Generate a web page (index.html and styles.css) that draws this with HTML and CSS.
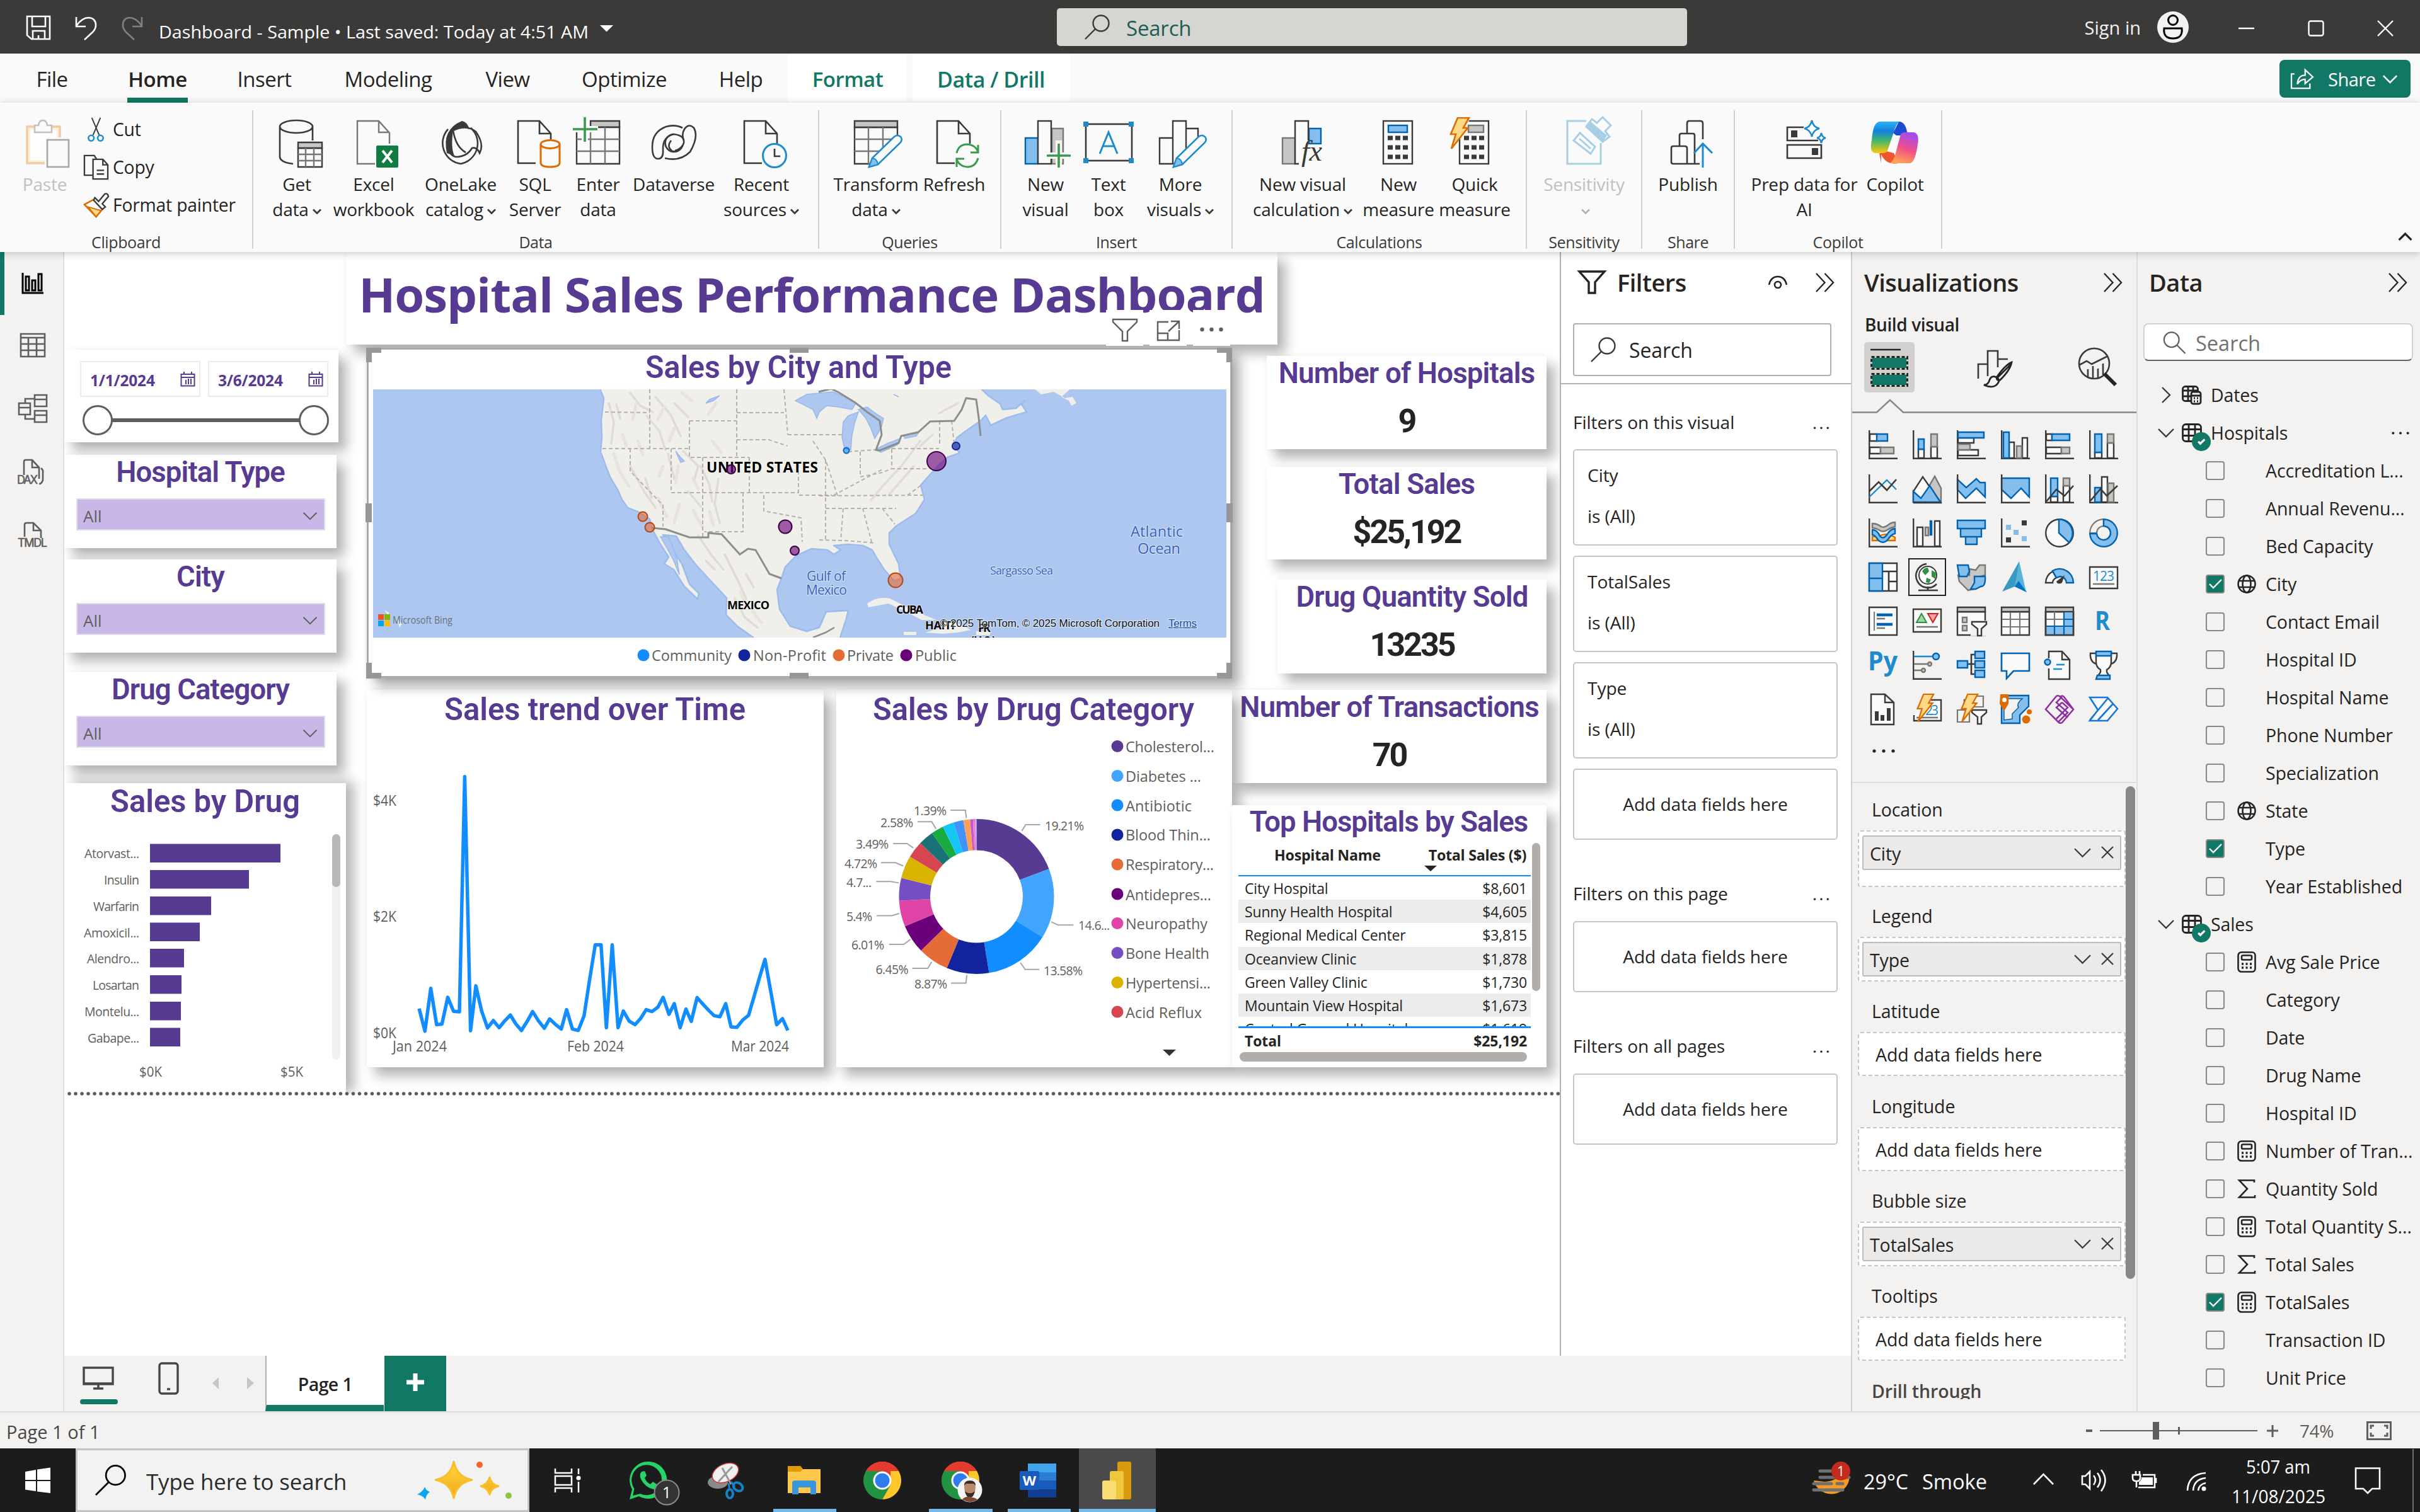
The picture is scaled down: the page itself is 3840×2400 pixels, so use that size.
FILE: index.html
```html
<!DOCTYPE html>
<html lang="en">
<head>
<meta charset="utf-8">
<title>Dashboard - Sample</title>
<link rel="stylesheet" href="styles.css">
</head>
<body>
<svg class="defs" width="0" height="0" aria-hidden="true">
  <defs>
    <symbol id="chev" viewBox="0 0 28 16"><path d="M2 2L14 14L26 2"/></symbol>
    <symbol id="dbl" viewBox="0 0 32 32"><path d="M2 1L16 16L2 31M16 1L30 16L16 31"/></symbol>
    <symbol id="mag" viewBox="0 0 40 40"><circle cx="26" cy="14" r="12.5"/><path d="M17 23L1 39"/></symbol>
    <symbol id="check" viewBox="0 0 30 30"><path d="M6 15L12 21L25 8"/></symbol>
    <symbol id="dots3" viewBox="0 0 36 6"><circle cx="3" cy="3" r="2.6"/><circle cx="18" cy="3" r="2.6"/><circle cx="33" cy="3" r="2.6"/></symbol>
    <symbol id="axis" viewBox="0 0 46 46"><path d="M1.2 0V44.8H46" fill="none" stroke="#3b3a39" stroke-width="2.4"/></symbol>
    <symbol id="globe" viewBox="0 0 30 30"><circle cx="15" cy="15" r="13.5"/><ellipse cx="15" cy="15" rx="6.5" ry="13.5"/><path d="M2.5 10H27.5M2.5 20H27.5"/></symbol>
    <symbol id="calc" viewBox="0 0 30 34"><rect x="1.5" y="1.5" width="27" height="31" rx="5"/><rect x="7" y="6.500" width="16" height="7" rx="2"/><path d="M7 20h3M13.500 20h3M20 20h3M7 26h3M13.500 26h3M20 26h3" stroke-width="3.600"/></symbol>
    <symbol id="sigma" viewBox="0 0 30 30"><path d="M27 5V1.500H3L16 15L3 28.500H28V25"/></symbol>
    <symbol id="table" viewBox="0 0 32 30"><rect x="1.500" y="1.500" width="29" height="27" rx="5"/><path d="M1.500 9.500H30M1.500 19.500H30M11 1.500V28M21 1.500V28"/></symbol>
    <symbol id="doc" viewBox="0 0 56 72"><path d="M54 38V22L36 2H2V69H30M36 2V22H54"/></symbol>
    <symbol id="pencil" viewBox="0 0 56 54"><path d="M2 52L7 38L42 4Q47 0 52 4Q56 9 51 14L16 48Z" fill="#fafafa" stroke="#1e8bcd" stroke-width="2.600"/><path d="M2 52L7 38Q15 39 16 48Z" fill="#83beec" stroke="#1e8bcd" stroke-width="2"/></symbol>
    <symbol id="bolt" viewBox="0 0 34 52"><path d="M14 1H32L23 17H30L4 50L11 27H3Z" fill="#ffd986" stroke="#dd6b00" stroke-width="2.600"/></symbol>
    <symbol id="cyl" viewBox="0 0 34 46"><path d="M2 8V38Q3 44 17 44T32 38V8" fill="#fafafa"/><ellipse cx="17" cy="8" rx="15" ry="6.500" fill="#fafafa"/></symbol>
    <symbol id="chrome" viewBox="0 0 60 60"><path d="M30 30L4 15A30 30 0 0 1 56 15Z" fill="#e33b2e"/><path d="M4 15A30 30 0 0 0 30 60L43 37L30 30Z" fill="#229342"/><path d="M56 15A30 30 0 0 1 30 60L43 37L43 15Z" fill="#fcc72b"/><path d="M4 15L17 38L30 15Z" fill="#229342"/><path d="M4 15A30 30 0 0 1 56 15H30Z" fill="#e33b2e"/><circle cx="30" cy="30" r="14.500" fill="#fff"/><circle cx="30" cy="30" r="11.500" fill="#2f7ded"/></symbol>
    <linearGradient id="cpA" x1="0" y1="0" x2="0" y2="1"><stop offset="0" stop-color="#2ab4f4"/><stop offset=".3" stop-color="#1380e0"/><stop offset=".6" stop-color="#43b668"/><stop offset="1" stop-color="#ffca0a"/></linearGradient>
    <linearGradient id="cpB" x1="0.600" y1="0" x2="0.300" y2="1"><stop offset="0" stop-color="#a34cf2"/><stop offset=".5" stop-color="#ee4f8a"/><stop offset="1" stop-color="#ffa84c"/></linearGradient>
    <linearGradient id="gold" x1="0" y1="0" x2="0" y2="1"><stop offset="0" stop-color="#ffd83a"/><stop offset="1" stop-color="#f0a81c"/></linearGradient>
  </defs>
</svg>

<header class="titlebar">
  <svg class="tb-left" viewBox="0 0 1000 85">
    <g fill="none" stroke="#fff" stroke-width="2.600">
      <path d="M43 26H79V62H50L43 56ZM51 26V42H72V26M52 62V49H71V62M61 56V62"/>
      <path d="M121 27V42H136M121 41Q130 28 141 28Q152 29 152 40Q152 46 147 51L134 63"/>
      <path d="M225 27V42H210M225 41Q216 28 205 28Q195 29 195 40Q195 46 200 51L213 63" stroke="#83817f"/>
    </g>
    <text x="252" y="60.500" textLength="682" lengthAdjust="spacingAndGlyphs" class="tb-title">Dashboard - Sample • Last saved: Today at 4:51 AM</text>
    <path d="M952 40H973L962.500 50.500Z" fill="#fff"/>
  </svg>
  <div class="tb-search"><svg class="ico40 st-dark"><use href="#mag"/></svg><span>Search</span></div>
  <div class="tb-right">
    <span>Sign in</span>
    <svg class="avatar" viewBox="0 0 50 50"><circle cx="25" cy="25" r="25" fill="#f3f2f1"/><g fill="none" stroke="#000" stroke-width="3"><circle cx="25" cy="14" r="7.500"/><path d="M11 27H39Q41 43 25 43T11 27Z"/></g></svg>
    <svg class="winbtn" viewBox="0 0 26 26"><path d="M0 13H25"/></svg>
    <svg class="winbtn" viewBox="0 0 26 26"><rect x="1.500" y="1.500" width="23" height="23" rx="3"/></svg>
    <svg class="winbtn" viewBox="0 0 26 26"><path d="M1 1L25 25M25 1L1 25"/></svg>
  </div>
</header>

<nav class="tabs">
  <span class="tab t-file">File</span><span class="tab t-home on">Home</span><span class="tab t-insert">Insert</span><span class="tab t-model">Modeling</span><span class="tab t-view">View</span><span class="tab t-opt">Optimize</span><span class="tab t-help">Help</span><span class="tab t-format ctx">Format</span><span class="tab t-drill ctx">Data / Drill</span>
  <div class="share"><svg viewBox="0 0 40 36" class="share-ico"><path d="M7 10H2V34H33V26M12 27Q13 12 25 12V3L38 15L25 26V19Q17 19 12 27Z"/></svg><span>Share</span><svg class="share-chev"><use href="#chev"/></svg></div>
</nav>

<section class="ribbon">
  <div class="grp g-clip">
    <div class="grp-body">
      <div class="btn off"><svg viewBox="0 0 100 90"><path d="M22 18H74V76H22Z" fill="#fbeed0" opacity=".8"/><rect x="27" y="23" width="42" height="48" fill="#fdfdfd"/><path d="M54 76H22V18H74V40" fill="none" stroke="#f3c99f" stroke-width="3.500"/><path d="M34 27V16H40Q41 8 47 8T54 16H61V27Z" fill="#fafafa" stroke="#c2c0be" stroke-width="2.500"/><rect x="50" y="35" width="42" height="52" fill="#fafafa"/><rect x="54" y="39" width="34" height="43" fill="#fafafa" stroke="#a9a7a5" stroke-width="2.600"/></svg><b>Paste</b></div>
      <div class="clip-list">
        <div><svg viewBox="0 0 42 42"><g fill="none" stroke="#3b3a39" stroke-width="2"><path d="M14 2L26 30M28 2L16 30"/></g><g fill="none" stroke="#1e8bcd" stroke-width="2.600"><circle cx="13" cy="35" r="4.500"/><circle cx="28" cy="35" r="4.500"/></g></svg>Cut</div>
        <div><svg viewBox="0 0 42 42"><g fill="#fafafa" stroke="#3b3a39" stroke-width="2.400"><path d="M2 2H18L22 8V34H2Z"/><path d="M16 8H32L40 17V40H16ZM32 8V17H40M22 26H34M22 32H34"/></g></svg>Copy</div>
        <div><svg viewBox="0 0 42 42"><path d="M19 11L2 20L21 40L33 26Z" fill="#fafafa" stroke="#dd6b00" stroke-width="2.600"/><path d="M8 24L21 40L29 30Z" fill="#ffd986" stroke="#dd6b00" stroke-width="2"/><path d="M19 9L25 15L35 3Q40 1 41 7L31 19L36 24L31 28L17 13Z" fill="#fafafa" stroke="#3b3a39" stroke-width="2.400"/></svg>Format painter</div>
      </div>
    </div>
    <div class="grp-name">Clipboard</div>
  </div>
  <div class="grp g-data">
    <div class="grp-body">
      <div class="btn"><svg viewBox="0 0 100 90"><g class="k"><path d="M23 18V66Q24 75 44 77M75 18V40"/><ellipse cx="49" cy="18" rx="26" ry="10"/></g><path d="M52 52H90V82H52Z" class="wh"/><path d="M52 43H90V52H52Z" class="gf"/><path d="M52 62H90M52 72H90M64 52V82M77 52V82" class="k2"/></svg><b>Get<br>data<svg class="dn"><use href="#chev"/></svg></b></div>
      <div class="btn"><svg viewBox="0 0 100 90"><path d="M75 45V28L58 9H24V77H52M58 9V27H75" fill="none" stroke="#797774" stroke-width="2.400"/><rect x="54" y="48" width="35" height="35" rx="2" fill="#107c41"/><path d="M64 56L79 75M79 56L64 75" stroke="#fff" stroke-width="4"/></svg><b>Excel<br>workbook</b></div>
      <div class="btn"><svg viewBox="0 0 100 90"><path d="M28 60Q20 22 52 9Q60 10 64 22Q50 16 38 24Q34 52 40 64Z" fill="#3b3a39"/><g class="k"><path d="M30 22A33 33 0 0 0 50 77A33 33 0 0 0 66 20"/><path d="M38 24Q60 14 74 26Q88 46 80 60Q76 50 68 52Q60 66 42 66Q28 62 28 40Q30 26 38 24ZM38 24Q42 50 58 59"/></g></svg><b>OneLake<br>catalog<svg class="dn"><use href="#chev"/></svg></b></div>
      <div class="btn"><svg viewBox="0 0 100 90"><svg x="21" y="7" width="56" height="72" class="k"><use href="#doc"/></svg><svg x="57" y="38" width="34" height="46" class="o"><use href="#cyl"/></svg></svg><b>SQL<br>Server</b></div>
      <div class="btn"><svg viewBox="0 0 100 90"><path d="M38 9H84V19H38Z" class="gf"/><path d="M16 19H84V77H16Z" class="wh"/><path d="M16 38H84M16 57H84M38 19V77M61 19V77" class="k2"/><path d="M29 0V44M8 22H50" stroke="#fafafa" stroke-width="10"/><path d="M29 3V42M10 22H49" stroke="#3a9a4b" stroke-width="3.600"/></svg><b>Enter<br>data</b></div>
      <div class="btn"><svg viewBox="0 0 100 90"><g class="k"><path d="M50 30A14 14 0 1 0 64 48A20 20 0 0 1 52 56"/><path d="M64 20Q52 14 38 18Q16 26 16 50Q16 70 26 69Q34 68 33 55Q32 34 50 30Q68 32 66 44Q60 60 48 57Q38 50 46 40"/><path d="M36 68Q60 74 76 58Q90 34 82 20Q74 12 67 22Q62 30 66 40"/></g></svg><b>Dataverse</b></div>
      <div class="btn"><svg viewBox="0 0 100 90"><svg x="21" y="7" width="56" height="72" class="k"><use href="#doc"/></svg><circle cx="71" cy="64" r="18.500" fill="#fafafa" stroke="#1e8bcd" stroke-width="3"/><path d="M71 53V65H80" class="k"/></svg><b>Recent<br>sources<svg class="dn"><use href="#chev"/></svg></b></div>
    </div>
    <div class="grp-name">Data</div>
  </div>
  <div class="grp g-query">
    <div class="grp-body">
      <div class="btn"><svg viewBox="0 0 100 90"><path d="M16 19H84V77H16Z" class="wh"/><path d="M16 9H84V19H16Z" class="gf"/><path d="M16 38H84M16 57H84M38 19V77M61 19V77" class="k2"/><path d="M46 86L92 40V90H46Z" fill="#fafafa"/><svg x="37" y="30" width="56" height="54"><use href="#pencil"/></svg></svg><b>Transform<br>data<svg class="dn"><use href="#chev"/></svg></b></div>
      <div class="btn"><svg viewBox="0 0 100 90"><svg x="21" y="7" width="56" height="72" class="k"><use href="#doc"/></svg><path d="M54 60Q57 46 71 46Q84 47 88 58M88 47V59H76M88 68Q84 82 71 82Q58 81 54 70M54 82V69H66" fill="none" stroke="#3a9a4b" stroke-width="3"/></svg><b>Refresh</b></div>
    </div>
    <div class="grp-name">Queries</div>
  </div>
  <div class="grp g-insert">
    <div class="grp-body">
      <div class="btn"><svg viewBox="0 0 100 90"><rect x="18" y="36" width="20" height="41" class="b"/><rect x="60" y="21" width="18" height="56" class="g"/><rect x="38" y="9" width="21" height="68" class="w"/><path d="M71 40V86M50 64H92" stroke="#fafafa" stroke-width="10"/><path d="M71 45V83M52 64H90" stroke="#3a9a4b" stroke-width="3.600"/></svg><b>New<br>visual</b></div>
      <div class="btn"><svg viewBox="0 0 100 90"><rect x="14" y="14" width="73" height="58" class="k"/><path d="M10 10h8v8h-8zM82 10h8v8h-8zM10 68h8v8h-8zM82 68h8v8h-8z" fill="#1e8bcd"/><path d="M36 61L50 27L64 61M41 49H59" fill="none" stroke="#1e8bcd" stroke-width="3"/></svg><b>Text<br>box</b></div>
      <div class="btn"><svg viewBox="0 0 100 90"><path d="M17 36H38V77H17ZM38 9H59V77H38ZM59 21H78V77H59Z" class="w"/><path d="M46 86L92 40V90H46Z" fill="#fafafa"/><svg x="37" y="30" width="56" height="54"><use href="#pencil"/></svg></svg><b>More<br>visuals<svg class="dn"><use href="#chev"/></svg></b></div>
    </div>
    <div class="grp-name">Insert</div>
  </div>
  <div class="grp g-calc">
    <div class="grp-body">
      <div class="btn"><svg viewBox="0 0 100 90"><rect x="18" y="36" width="20" height="41" class="g"/><rect x="60" y="21" width="19" height="24" class="b"/><path d="M44 77H38V9H59V40" class="w"/><text x="48" y="72" class="fx">fx</text></svg><b>New visual<br>calculation<svg class="dn"><use href="#chev"/></svg></b></div>
      <div class="btn"><svg viewBox="0 0 100 90"><rect x="26" y="9" width="46" height="68" class="w"/><rect x="34" y="16" width="30" height="11" class="b"/><path d="M33 36h8M45 36h8M57 36h8M33 51h8M45 51h8M57 51h8M33 66h8M45 66h8M57 66h8" stroke="#3b3a39" stroke-width="7"/></svg><b>New<br>measure</b></div>
      <div class="btn"><svg viewBox="0 0 100 90"><rect x="26" y="9" width="46" height="68" class="w"/><rect x="40" y="16" width="24" height="11" class="g"/><path d="M33 36h8M45 36h8M57 36h8M33 51h8M45 51h8M57 51h8M33 66h8M45 66h8M57 66h8" stroke="#3b3a39" stroke-width="7"/><path d="M4 0H44L36 22L14 56H4Z" fill="#fafafa"/><svg x="8" y="3" width="36" height="52"><use href="#bolt"/></svg></svg><b>Quick<br>measure</b></div>
    </div>
    <div class="grp-name">Calculations</div>
  </div>
  <div class="grp g-sens">
    <div class="grp-body">
      <div class="btn off"><svg viewBox="0 0 100 90"><g fill="none" stroke="#a6cfe6" stroke-width="3"><path d="M53 9H23V77H76V44"/><path d="M33 40L43 28L67 50L60 61Z" /><path d="M42 37L60 53"/><path d="M53 18L62 6L70 12L79 3L92 16L83 25L90 34L79 42Z"/></g><path d="M53 18L60 10L86 32L79 42Z" fill="#a6cfe6"/></svg><b>Sensitivity<br><svg class="dn"><use href="#chev"/></svg></b></div>
    </div>
    <div class="grp-name">Sensitivity</div>
  </div>
  <div class="grp g-share">
    <div class="grp-body">
      <div class="btn"><svg viewBox="0 0 100 90"><path d="M68 77H26Q23 77 23 74V52Q23 49 26 49H44Q48 49 48 52V77M36 49V32Q36 29 39 29H57Q60 29 60 32V77M48 29V13Q48 9 51 9H69Q73 9 73 13V38" class="k"/><path d="M73 83V46M59 60L73 45L88 60" fill="none" stroke="#1e8bcd" stroke-width="3"/></svg><b>Publish</b></div>
    </div>
    <div class="grp-name">Share</div>
  </div>
  <div class="grp g-copilot">
    <div class="grp-body">
      <div class="btn"><svg viewBox="0 0 100 90"><path d="M49 19H23V40H72M23 47H77V68H23Z" class="k"/><path d="M29 24h10v11h-10zM62 52h10v11h-10z" fill="#3b3a39"/><path d="M62 8Q64 19 74 21Q64 23 62 34Q60 23 50 21Q60 19 62 8ZM77 28Q78 35 84 36Q78 37 77 44Q76 37 70 36Q76 35 77 28Z" fill="#fff" stroke="#1e8bcd" stroke-width="2.600"/></svg><b>Prep data for<br>AI</b></div>
      <div class="btn"><svg viewBox="0 0 100 90"><path d="M56 10Q66 10 69 26L74 32L52 32L47 28Z" fill="#1b4bd0"/><path d="M28 76L24 54L48 60L56 76Q36 80 28 62Z" fill="#f0562e"/><path d="M26 10H57Q51 14 48 27L38 56Q36 60 30 60H18Q9 58 13 40Q15 10 26 10Z" fill="url(#cpA)"/><path d="M73 76H42Q48 72 51 60L59 30Q61 27 66 27H80Q89 29 86 46Q82 76 73 76Z" fill="url(#cpB)"/></svg><b>Copilot</b></div>
    </div>
    <div class="grp-name">Copilot</div>
  </div>
  <svg class="collapse"><use href="#chev"/></svg>
</section>

<main class="main">
  <aside class="rail">
    <i class="rail-on"></i>
    <svg viewBox="0 0 102 480">
      <g fill="none" stroke="#000" stroke-width="3"><path d="M36 33V65H69"/><rect x="41" y="39" width="5" height="22"/><rect x="51" y="45" width="5" height="16"/><rect x="61" y="35" width="5" height="26"/></g>
      <g fill="none" stroke="#605e5c" stroke-width="2.600"><path d="M33 130H71V166H33ZM33 136H71M33 146H71M33 156H71M45 136V166M58 136V166"/>
      <path d="M55 227H74V245H55ZM55 234H74M55 252H74V270H55ZM55 259H74M30 240H48V258H30ZM30 247H48M40 240V233H55M40 258V265H55"/>
      <path d="M38 354V333Q38 330 41 330H51L62 342V360M51 330V342H62M65 343Q69 346 68 350V362Q66 368 62 368"/>
      <path d="M39 452V433Q39 430 42 430H53L65 442V454M53 430V442H65"/></g>
      <text x="27" y="368" textLength="33" class="rl">DAX</text><text x="28" y="468" textLength="47" class="rl">TMDL</text>
    </svg>
  </aside>

  <div class="center">
    <div class="work">
      <div class="canvas">
        <div class="vis v-title"><span>Hospital Sales Performance Dashboard</span></div>
        <div class="vis v-date">
          <div class="dates"><div class="date">1/1/2024<svg viewBox="0 0 24 24"><path d="M1.500 4H22.500V22.500H1.500ZM1.500 9H22.500M6 0V5M18 0V5M9 13v7M13 11v9M17 11v9" fill="none" stroke="#573b92" stroke-width="2"/></svg></div><div class="date">3/6/2024<svg viewBox="0 0 24 24"><path d="M1.500 4H22.500V22.500H1.500ZM1.500 9H22.500M6 0V5M18 0V5M9 13v7M13 11v9M17 11v9" fill="none" stroke="#573b92" stroke-width="2"/></svg></div></div>
          <div class="slider"><i></i><i></i></div>
        </div>
        <div class="vis v-slicer v-type"><h3>Hospital Type</h3><div class="drop">All<svg><use href="#chev"/></svg></div></div>
        <div class="vis v-slicer v-city"><h3>City</h3><div class="drop">All<svg><use href="#chev"/></svg></div></div>
        <div class="vis v-slicer v-cat"><h3>Drug Category</h3><div class="drop">All<svg><use href="#chev"/></svg></div></div>

        <div class="vis v-drug">
          <svg viewBox="102 1243 447 493">
            <text x="175" y="1288.500" textLength="301" lengthAdjust="spacingAndGlyphs" class="din">Sales by Drug</text>
            <g fill="#573b92"><rect x="238" y="1339.500" width="207" height="29.500"/><rect x="238" y="1381" width="157" height="29.500"/><rect x="238" y="1423" width="97" height="29.500"/><rect x="238" y="1464.500" width="79" height="29.500"/><rect x="238" y="1506" width="54" height="29.500"/><rect x="238" y="1548" width="50" height="29.500"/><rect x="238" y="1590" width="49" height="29.500"/><rect x="238" y="1631.500" width="48" height="29.500"/></g>
            <g class="ax20"><text x="134" y="1362" textLength="87">Atorvast...</text><text x="165" y="1404" textLength="56">Insulin</text><text x="148" y="1446" textLength="73">Warfarin</text><text x="133" y="1487.500" textLength="88">Amoxicil...</text><text x="138" y="1529" textLength="83">Alendro...</text><text x="147" y="1571" textLength="74">Losartan</text><text x="134" y="1613" textLength="87">Montelu...</text><text x="139" y="1654.500" textLength="82">Gabape...</text></g>
            <g class="ax22"><text x="221" y="1709" textLength="36" lengthAdjust="spacingAndGlyphs">$0K</text><text x="445" y="1709" textLength="36" lengthAdjust="spacingAndGlyphs">$5K</text></g>
            <rect x="527" y="1324" width="13" height="358" rx="6.500" fill="#f0f0f0"/><rect x="527" y="1324" width="13" height="84" rx="6.500" fill="#b8b8b8"/>
          </svg>
        </div>

        <div class="vis v-hosp kpi"><h3>Number of Hospitals</h3><p>9</p></div>
        <div class="vis v-total kpi"><h3>Total Sales</h3><p>$25,192</p></div>
        <div class="vis v-qty kpi"><h3>Drug Quantity Sold</h3><p>13235</p></div>
        <div class="vis v-trans kpi"><h3>Number of Transactions</h3><p>70</p></div>

        <div class="vis v-trend">
          <svg viewBox="582 1095 725 599">
            <text x="705" y="1142.500" textLength="478" lengthAdjust="spacingAndGlyphs" class="din">Sales trend over Time</text>
            <g class="ax23"><text x="592" y="1279" textLength="37" lengthAdjust="spacingAndGlyphs">$4K</text><text x="592" y="1463" textLength="37" lengthAdjust="spacingAndGlyphs">$2K</text><text x="592" y="1648" textLength="37" lengthAdjust="spacingAndGlyphs">$0K</text><text x="623" y="1669" textLength="86" lengthAdjust="spacingAndGlyphs">Jan 2024</text><text x="900" y="1669" textLength="90" lengthAdjust="spacingAndGlyphs">Feb 2024</text><text x="1160" y="1669" textLength="92" lengthAdjust="spacingAndGlyphs">Mar 2024</text></g>
            <g transform="translate(0 1080) scale(.8418 .4337)"><polyline vector-effect="non-scaling-stroke" fill="none" stroke="#118dff" stroke-width="5.500" stroke-linejoin="round" points="790,1201 801,1284 812,1127 823,1260 833,1258 844,1160 855,1211 866,1213 876,352 887,1282 897,1118 908,1211 919,1272 930,1245 941,1271 951,1247 962,1225 973,1259 983,1281 994,1247 1004,1212 1015,1246 1026,1273 1036,1239 1047,1259 1058,1276 1068,1205 1079,1276 1090,1281 1101,1227 1111,1100 1122,968 1133,968 1143,1271 1154,968 1165,1271 1175,1210 1186,1247 1197,1260 1208,1236 1218,1205 1229,1212 1240,1196 1250,1160 1261,1222 1271,1183 1282,1271 1293,1203 1303,1248 1314,1161 1325,1185 1336,1208 1346,1227 1357,1231 1368,1183 1378,1268 1389,1270 1400,1243 1411,1226 1421,1160 1431,1092 1442,1021 1453,1140 1464,1260 1475,1238 1485,1281"/></g>
          </svg>
        </div>

        <div class="vis v-donut">
          <svg viewBox="1327 1095 628 599">
            <text x="1385" y="1142.500" textLength="510" lengthAdjust="spacingAndGlyphs" class="din">Sales by Drug Category</text>
            <g fill="none" stroke-width="49.500" transform="rotate(-90 1549.500 1423)">
              <circle cx="1549.500" cy="1423" r="98.250" pathLength="100" stroke="#573b92" stroke-dasharray="19.210 100"/>
              <circle cx="1549.500" cy="1423" r="98.250" pathLength="100" stroke="#41a4ff" stroke-dasharray="14.600 100" stroke-dashoffset="-19.210"/>
              <circle cx="1549.500" cy="1423" r="98.250" pathLength="100" stroke="#118dff" stroke-dasharray="13.580 100" stroke-dashoffset="-33.810"/>
              <circle cx="1549.500" cy="1423" r="98.250" pathLength="100" stroke="#12239e" stroke-dasharray="8.870 100" stroke-dashoffset="-47.390"/>
              <circle cx="1549.500" cy="1423" r="98.250" pathLength="100" stroke="#e66c37" stroke-dasharray="6.450 100" stroke-dashoffset="-56.260"/>
              <circle cx="1549.500" cy="1423" r="98.250" pathLength="100" stroke="#6b007b" stroke-dasharray="6.010 100" stroke-dashoffset="-62.710"/>
              <circle cx="1549.500" cy="1423" r="98.250" pathLength="100" stroke="#e044a7" stroke-dasharray="5.400 100" stroke-dashoffset="-68.720"/>
              <circle cx="1549.500" cy="1423" r="98.250" pathLength="100" stroke="#744ec2" stroke-dasharray="4.750 100" stroke-dashoffset="-74.120"/>
              <circle cx="1549.500" cy="1423" r="98.250" pathLength="100" stroke="#d9b300" stroke-dasharray="4.720 100" stroke-dashoffset="-78.870"/>
              <circle cx="1549.500" cy="1423" r="98.250" pathLength="100" stroke="#d64550" stroke-dasharray="3.490 100" stroke-dashoffset="-83.590"/>
              <circle cx="1549.500" cy="1423" r="98.250" pathLength="100" stroke="#197278" stroke-dasharray="3.200 100" stroke-dashoffset="-87.080"/>
              <circle cx="1549.500" cy="1423" r="98.250" pathLength="100" stroke="#1aab40" stroke-dasharray="2.580 100" stroke-dashoffset="-90.280"/>
              <circle cx="1549.500" cy="1423" r="98.250" pathLength="100" stroke="#15c6f4" stroke-dasharray="2.350 100" stroke-dashoffset="-92.860"/>
              <circle cx="1549.500" cy="1423" r="98.250" pathLength="100" stroke="#4092ff" stroke-dasharray="2.050 100" stroke-dashoffset="-95.210"/>
              <circle cx="1549.500" cy="1423" r="98.250" pathLength="100" stroke="#ffa058" stroke-dasharray="1.390 100" stroke-dashoffset="-97.260"/>
              <circle cx="1549.500" cy="1423" r="98.250" pathLength="100" stroke="#be5dc9" stroke-dasharray=".600 100" stroke-dashoffset="-98.650"/>
              <circle cx="1549.500" cy="1423" r="98.250" pathLength="100" stroke="#f472d0" stroke-dasharray=".450 100" stroke-dashoffset="-99.250"/>
              <circle cx="1549.500" cy="1423" r="98.250" pathLength="100" stroke="#b5a1ff" stroke-dasharray=".300 100" stroke-dashoffset="-99.700"/>
            </g>
            <g transform="translate(1300 1080) scale(.7653 .4337)" fill="none" stroke="#a6a6a6" stroke-width="2"><path vector-effect="non-scaling-stroke" d="M420 551L428 528H458M481 884L495 895H527M417 1033L427 1058H456M306 1078L304 1108H273M233 1030L225 1054H193M189 948L175 966H145M166 853L150 861H119M165 741L148 736H118M174 679L158 667H128M195 613L182 597H153M242 543L233 517H204M305 504L303 475H272"/></g>
            <g class="ax20"><text x="1658" y="1318" textLength="62">19.21%</text><text x="1711" y="1476" textLength="50">14.6...</text><text x="1656" y="1547.500" textLength="62">13.58%</text><text x="1451" y="1569" textLength="52">8.87%</text><text x="1389.500" y="1546" textLength="52">6.45%</text><text x="1351" y="1507" textLength="52">6.01%</text><text x="1343" y="1462" textLength="41">5.4%</text><text x="1343" y="1407.500" textLength="40">4.7...</text><text x="1340" y="1378" textLength="52">4.72%</text><text x="1358" y="1347" textLength="52">3.49%</text><text x="1397" y="1313" textLength="52">2.58%</text><text x="1450" y="1294" textLength="52">1.39%</text></g>
            <g><circle cx="1773" cy="1184.500" r="9.500" fill="#573b92"/><circle cx="1773" cy="1231.500" r="9.500" fill="#41a4ff"/><circle cx="1773" cy="1278" r="9.500" fill="#118dff"/><circle cx="1773" cy="1325" r="9.500" fill="#12239e"/><circle cx="1773" cy="1372" r="9.500" fill="#e66c37"/><circle cx="1773" cy="1419" r="9.500" fill="#6b007b"/><circle cx="1773" cy="1465.500" r="9.500" fill="#e044a7"/><circle cx="1773" cy="1512.500" r="9.500" fill="#744ec2"/><circle cx="1773" cy="1559.500" r="9.500" fill="#d9b300"/><circle cx="1773" cy="1606" r="9.500" fill="#d64550"/></g>
            <g class="ax23"><text x="1786" y="1194" textLength="141">Cholesterol...</text><text x="1786" y="1240.500" textLength="120">Diabetes ...</text><text x="1786" y="1287.500" textLength="105">Antibiotic</text><text x="1786" y="1334" textLength="135">Blood Thin...</text><text x="1786" y="1381" textLength="140">Respiratory...</text><text x="1786" y="1428.500" textLength="136">Antidepres...</text><text x="1786" y="1475" textLength="130">Neuropathy</text><text x="1786" y="1522" textLength="133">Bone Health</text><text x="1786" y="1569" textLength="135">Hypertensi...</text><text x="1786" y="1616" textLength="121">Acid Reflux</text></g>
            <path d="M1845 1666H1866L1855.500 1676Z" fill="#333"/>
          </svg>
        </div>

        <div class="vis v-top">
          <h3>Top Hospitals by Sales</h3>
          <div class="tbl">
            <div class="tr th"><span>Hospital Name</span><span>Total Sales ($)</span></div>
            <div class="rows">
              <div class="tr"><span>City Hospital</span><span>$8,601</span></div>
              <div class="tr"><span>Sunny Health Hospital</span><span>$4,605</span></div>
              <div class="tr"><span>Regional Medical Center</span><span>$3,815</span></div>
              <div class="tr"><span>Oceanview Clinic</span><span>$1,878</span></div>
              <div class="tr"><span>Green Valley Clinic</span><span>$1,730</span></div>
              <div class="tr"><span>Mountain View Hospital</span><span>$1,673</span></div>
              <div class="tr"><span>Central General Hospital</span><span>$1,619</span></div>
            </div>
            <div class="tr tot"><span>Total</span><span>$25,192</span></div>
            <div class="hbar"></div>
          </div>
          <i class="vbar"></i><i class="sort"></i>
        </div>

        <div class="vis v-map">
          <svg viewBox="580 549 1378 530">
            <text x="1024" y="599.500" textLength="486" lengthAdjust="spacingAndGlyphs" class="din">Sales by City and Type</text>
            <svg x="592" y="618" width="1354" height="394" viewBox="592 618 1354 394" class="map">
              <rect x="592" y="618" width="1354" height="394" fill="#adc7f1"/>
              <path fill="#f0efea" stroke="#9dbcec" stroke-width="2.500" stroke-linejoin="round" d="M950 612L958 632L954 668L955 695L953 717L961 739L968 757L981 779L987 793L996 806L1014 813L1031 824L1035 840L1048 864L1061 884L1054 895L1069 904L1086 931L1107 951L1109 942L1094 927L1082 895L1065 869L1052 849L1073 851L1086 873L1103 895L1124 918L1153 949L1152 976L1170 994L1204 1018H1331L1342 985L1346 969L1311 971L1300 996L1280 1002L1254 994L1237 967L1233 936L1240 918L1246 900L1263 882L1288 871L1313 873L1323 880L1334 873L1323 866L1346 864L1369 866L1384 873L1392 887L1403 904L1419 922L1429 918L1426 895L1411 864L1411 846L1422 835L1453 815L1467 793L1461 770L1476 753L1490 738L1503 726L1523 719L1514 708L1518 695L1537 681L1556 668L1564 659L1572 675L1598 663L1629 654L1621 642L1626 636L1612 648L1591 650L1587 641L1568 628L1552 612Z"/>
              <g fill="#f0efea"><path d="M1640 616L1652 626L1672 622L1690 632L1702 630L1708 640L1700 644L1696 636L1684 630L1700 616Z"/><path d="M1376 958Q1392 946 1412 950L1440 964L1466 976L1486 984L1462 984L1440 972L1410 958L1378 964Z"/><path d="M1488 988L1510 986L1530 994L1540 1000L1520 1004L1496 1006L1468 1004L1490 998ZM1549 1002h22v6h-22zM1434 1003h20v5h-20z"/><path d="M610 968l8 5l-3 3zM630 982l8 8l-4 6z"/></g>
              <g fill="none" stroke="#d3d0c6" stroke-width="3.500" stroke-linecap="round" opacity=".6"><path d="M966 640l8 30l-4 34M978 642l6 22M1000 624l16 20l20 10M1026 660l20 24l10 30M1040 630l24 28l16 34M1070 640l22 22M1000 740l22 40l18 26M1024 760l10 30M1060 720l10 40M1084 716l24 24l-6 20M1112 740l14 30l4 26M1092 780l20 24M1140 760l-6 40l8 30M1108 850l20 30l20 24M1150 880l20 40l14 30M1166 950l16 30l20 16M1120 890l14 14M1184 912l12 20M1460 700l-30 40l-28 30l-20 24M1450 740l-40 46M1480 690l-20 18M1520 640l-30 16"/><path d="M974 720l10 30l14 22M1012 700l8 22M1076 740l-4 26M1044 790l14 30M1078 800l-8 30M1100 810l14 26M1010 640l-6 26M1054 646l-10 20M1082 624l16 12M1136 640l-12 18M1070 680l-8 20M1100 760l8 16M1126 812l6 22M1176 940l8 24M1194 970l14 18M1052 740l-6 16M988 690l6 18M1130 700l14 18" stroke-width="5" stroke="#e0ddd5"/></g>
              <g fill="#adc7f1" stroke="#98b9ea" stroke-width="1.500"><path d="M1262 636L1280 626L1300 624L1322 622L1340 630L1358 640L1352 650L1330 646L1312 644L1300 654L1296 664L1290 650Z"/><path d="M1338 670L1346 660L1362 654L1356 672L1352 690L1350 714L1340 712L1336 694Z"/><path d="M1362 650L1376 646L1392 658L1402 664L1398 680L1388 696L1382 680L1374 664Z"/><path d="M1388 714L1408 704L1428 696L1424 706L1398 718Z"/><path d="M1434 692L1458 686L1454 692L1436 696Z"/><path d="M1072 716l8 10l6 6l-6 2zM1126 634l16-6l-10 8l-12 4zM1418 626l8 4"/><path d="M1048 852l8 14l12 22l10 24l-4-26l-8-22l-6-12z"/></g>
              <g fill="none" stroke="#b5b2ac" stroke-width="2" stroke-dasharray="6 4"><path d="M960 654L1031 655M1031 618V712M956 712H1094M1169 618V726M1094 668H1169M1169 655H1244M1244 618L1250 690M1169 698L1220 698L1250 708M1094 668V726H1189M1065 712V782H1267M1000 712V748L1052 802V836M1115 726V853M1189 726V782M1179 782V844H1118M1212 786V811L1271 822L1273 860M1267 737V786H1320M1250 690H1340M1365 717V757M1346 717L1415 712V744H1472M1415 712H1490M1300 787L1465 786M1310 807H1422M1338 807L1334 858M1369 807L1384 864M1300 857L1340 858L1390 862M1491 668V704M1510 668L1514 704M1323 786L1400 745M1310 730V860M1290 700L1310 730L1330 790M1400 807L1420 832M1440 786L1462 770M1365 757L1400 750L1415 744"/></g>
              <g fill="none" stroke="#8b8d8e" stroke-width="3"><path d="M1035 838L1056 840L1094 853L1124 853V846L1145 848L1174 880L1187 871L1199 873L1221 911L1240 918M1299 622L1319 617L1331 623L1357 639L1376 654L1396 668L1399 690L1390 714L1396 715L1426 703L1430 692L1457 686L1476 669L1514 668L1526 650L1533 632L1549 634L1553 663L1556 692"/><path d="M1290 1012l20-8l14-8" stroke-width="2.500"/></g>
              <g class="mb"><text x="1121" y="749.500" font-size="23" textLength="177">UNITED STATES</text><text x="1154" y="966.500" font-size="18" textLength="67">MEXICO</text><text x="1422" y="973.500" font-size="18" textLength="43">CUBA</text><text x="1468" y="999" font-size="18" textLength="47">HAITI</text><text x="1552" y="1003" font-size="18" textLength="20">PR</text><text x="1540" y="1023" font-size="18" textLength="40">(U.S.)</text></g>
              <g class="ms"><text x="1280" y="922" font-size="21" textLength="62">Gulf of</text><text x="1279" y="944" font-size="21" textLength="65">Mexico</text><text x="1794" y="852" font-size="23.500" textLength="83">Atlantic</text><text x="1805" y="879" font-size="23.500" textLength="68">Ocean</text><text x="1571" y="912" font-size="18" textLength="100">Sargasso Sea</text></g>
              <g stroke-width="2" fill-opacity=".62"><circle cx="1160" cy="745" r="7" fill="#6b007b" stroke="#3d0047"/><circle cx="1020" cy="820" r="7.500" fill="#e66c37" stroke="#b04a1c"/><circle cx="1031" cy="837" r="7.500" fill="#e66c37" stroke="#b04a1c"/><circle cx="1246" cy="836" r="10.500" fill="#6b007b" stroke="#3d0047"/><circle cx="1261" cy="874" r="7" fill="#6b007b" stroke="#3d0047"/><circle cx="1343" cy="715" r="4.500" fill="#118dff" stroke="#0b66c0"/><circle cx="1517" cy="708" r="6" fill="#12239e" stroke="#12239e"/><circle cx="1486" cy="732" r="15" fill="#6b007b" stroke="#3d0047"/><circle cx="1421" cy="921" r="11.500" fill="#e66c37" stroke="#b04a1c"/></g>
              <path d="M600 975h9v9h-9z" fill="#f25022"/><path d="M610 975h9v9h-9z" fill="#7fba00"/><path d="M600 985h9v9h-9z" fill="#00a4ef"/><path d="M610 985h9v9h-9z" fill="#ffb900"/>
              <text x="623" y="990" font-size="16.500" textLength="95" lengthAdjust="spacingAndGlyphs" class="bing">Microsoft Bing</text>
              <g class="cr"><text x="1491" y="994.500" textLength="349">© 2025 TomTom, © 2025 Microsoft Corporation</text><text x="1854" y="994.500" textLength="45" text-decoration="underline">Terms</text></g>
            </svg>
            <circle cx="1021" cy="1040" r="9.500" fill="#118dff"/><circle cx="1181" cy="1040" r="9.500" fill="#12239e"/><circle cx="1331" cy="1040" r="9.500" fill="#e66c37"/><circle cx="1438" cy="1040" r="9.500" fill="#6b007b"/>
            <g class="ax23"><text x="1034" y="1048.500" textLength="127">Community</text><text x="1195" y="1048.500" textLength="116">Non-Profit</text><text x="1344" y="1048.500" textLength="74">Private</text><text x="1452" y="1048.500" textLength="66">Public</text></g>
            <path d="M583.500 553.500H1953.500V1074.500H583.500Z" fill="none" stroke="#9e9e9e" stroke-width="2.500"/>
            <path d="M581 575V552H605V560H590V575ZM1955 575V552H1931V560H1946V575ZM581 1052V1077H605V1068H590V1052ZM1955 1052V1077H1931V1068H1946V1052ZM1253 552h30v8h-30zM1253 1068h30v9h-30zM580 799h10v30h-10zM1946 799h10v30h-10z" fill="#979797"/>
          </svg>
        </div>
        <div class="vtools"><svg viewBox="0 0 59 57"><path d="M11 15H49V19L34 34V49H26V34L11 19Z"/></svg><svg viewBox="0 0 59 57"><path d="M30 19H13V48H47V32M13 37H29V48M30 34L46 19M34 18H47V30"/></svg><svg viewBox="0 0 59 57" class="fill"><circle cx="14.500" cy="31" r="3.200"/><circle cx="29.500" cy="31" r="3.200"/><circle cx="44.500" cy="31" r="3.200"/></svg></div>
        <svg class="pagebreak" viewBox="0 0 2368 6"><path d="M3 3H2368" stroke="#5c5a58" stroke-width="5.500" stroke-linecap="round" stroke-dasharray="0.010 10"/></svg>
      </div>

      <aside class="filters">
        <div class="phead"><svg class="funnel" viewBox="0 0 44 38"><path d="M2 2H42L27 19V36H17V19Z"/></svg><h2>Filters</h2><svg class="eye" viewBox="0 0 32 22"><path d="M2 15Q5 2 16 2T30 15"/><circle cx="16" cy="15" r="5"/></svg><svg class="dblx"><use href="#dbl"/></svg></div>
        <div class="fsearch"><svg class="ico40 st-dark"><use href="#mag"/></svg>Search</div>
        <hr>
        <div class="fsec">Filters on this visual<em>...</em></div>
        <div class="fcard">City<br>is (All)</div>
        <div class="fcard">TotalSales<br>is (All)</div>
        <div class="fcard">Type<br>is (All)</div>
        <div class="fcard add">Add data fields here</div>
        <div class="fsec">Filters on this page<em>...</em></div>
        <div class="fcard add">Add data fields here</div>
        <div class="fsec">Filters on all pages<em>...</em></div>
        <div class="fcard add">Add data fields here</div>
      </aside>
    </div>

    <footer class="pages">
      <svg class="pg-ico" viewBox="0 0 319 88"><g fill="none" stroke="#484644" stroke-width="3.400"><rect x="31" y="19" width="46" height="26"/><path d="M31 44H77M54 46V51M46 52H62"/><rect x="151" y="12" width="29" height="48" rx="4"/><path d="M163 53H168"/></g><rect x="25" y="69" width="60" height="8" rx="4" fill="#117865"/><path d="M245 34V53L235 43.500ZM290 34V53L301 43.500Z" fill="#c8c6c4"/></svg>
      <div class="pg-tab">Page 1</div>
      <div class="pg-add"><svg viewBox="0 0 28 28"><path d="M14 0V28M0 14H28"/></svg></div>
    </footer>
  </div>

  <aside class="viz">
    <div class="phead"><h2>Visualizations</h2><svg class="dblx"><use href="#dbl"/></svg></div>
    <div class="bv">Build visual</div>
    <div class="modes">
      <div class="mode on"><svg viewBox="0 0 80 80"><path d="M10 12H58" stroke="#252423" stroke-width="2.600"/><path d="M13 25H67V41H13ZM13 52H67V68H13Z" fill="#117865"/><path d="M11.500 23.500H68.500V42.500H11.500ZM11.500 50.500H68.500V69.500H11.500Z" fill="none" stroke="#252423" stroke-width="3" stroke-dasharray="5 3"/></svg></div>
      <div class="mode"><svg viewBox="-3 0 80 80"><path d="M13 58V35H28M28 54V14H44V40M44 27H60" class="k"/><path d="M66 34L42 58M66 32Q64 44 48 60Q42 62 42 56Q56 36 66 32ZM42 56Q34 52 31 60Q29 68 22 68Q40 76 46 62Q46 58 42 56Z" fill="#f3f2f1" stroke="#252423" stroke-width="2.800"/></svg></div>
      <div class="mode"><svg viewBox="5 0 80 80"><circle cx="40" cy="34" r="24" class="k"/><path d="M17 36L28 30L36 35L60 23M30 57V43M38 58V38M46 57V42M54 52V34" class="k"/><path d="M56 50L74 68" stroke="#252423" stroke-width="6"/></svg></div>
    </div>
    <svg class="caret" viewBox="0 0 452 24"><path d="M0 21.500H39L60 2L81 21.500H452"/></svg>
    <div class="vgrid">
      <svg viewBox="0 0 46 46"><use href="#axis"/><path class="w" d="M2 6h12v11h-12zM2 27h17v10h-17z"/><path class="b" d="M13 6h17v11h-17z"/><path class="g" d="M19 27h21v10h-21z"/></svg>
      <svg viewBox="0 0 46 46"><use href="#axis"/><path class="w" d="M9 30h9v14h-9zM29 26h10v18h-10z"/><path class="b" d="M9 14h9v16h-9z"/><path class="g" d="M29 6h10v20h-10z"/></svg>
      <svg viewBox="0 0 46 46"><use href="#axis"/><path class="w" d="M2 12h25v8h-25zM2 31h32v9h-32z"/><path class="b" d="M2 3h41v9h-41z"/><path class="g" d="M2 22h19v9h-19z"/></svg>
      <svg viewBox="0 0 46 46"><use href="#axis"/><path class="w" d="M13 19h8v25h-8zM34 12h8v32h-8z"/><path class="b" d="M4 3h9v41h-9z"/><path class="g" d="M25 25h8v19h-8z"/></svg>
      <svg viewBox="0 0 46 46"><use href="#axis"/><path class="w" d="M2 6h9v10h-9zM2 27h24v10h-24z"/><path class="b" d="M11 6h28v10h-28z"/><path class="g" d="M26 27h13v10h-13z"/></svg>
      <svg viewBox="0 0 46 46"><use href="#axis"/><path class="w" d="M9 35h11v9h-11zM29 20h10v24h-10z"/><path class="b" d="M9 6h11v29h-11z"/><path class="g" d="M29 6h10v14h-10z"/></svg>

      <svg viewBox="0 0 46 46"><use href="#axis"/><path d="M1 36L29 9L44 24" fill="none" stroke="#1e8bcd" stroke-width="2.400"/><path class="k" d="M1 27L16 12L29 25L44 8"/></svg>
      <svg viewBox="0 0 46 46"><path class="g" d="M24 22L35 3L45 22V44Z"/><path class="w" d="M1 44V27L16 4L30 24L44 44Z"/><path class="b" d="M1 44V27L13 38L27 18L44 44Z"/><path d="M1 45H46" class="k"/></svg>
      <svg viewBox="0 0 46 46"><path d="M1 24L14 38L31 22L45 36V44H1Z" fill="#fafafa"/><path class="b" d="M1 8L15 21L31 7L37 13H45V36L31 22L14 38L1 24Z"/><use href="#axis"/></svg>
      <svg viewBox="0 0 46 46"><path d="M1 24L16 38L32 22L45 36V44H1Z" fill="#fafafa"/><path class="b" d="M1 6H45V36L32 22L16 38L1 24Z"/><use href="#axis"/></svg>
      <svg viewBox="0 0 46 46"><use href="#axis"/><path class="w" d="M9 35h11v9h-11zM29 18h10v26h-10z"/><path class="b" d="M9 6h11v29h-11z"/><path class="g" d="M29 6h10v12h-10z"/><path class="k" d="M2 43L18 24L31 34L45 18"/></svg>
      <svg viewBox="0 0 46 46"><use href="#axis"/><path class="b" d="M9 21h10v23h-10z"/><path class="w" d="M20 4h9v40h-9z"/><path class="g" d="M30 14h9v30h-9z"/><path class="k" d="M2 42L18 23L28 34L45 18"/></svg>

      <svg viewBox="0 0 46 46"><use href="#axis"/><path d="M6 29Q14 29 22 26T42 30V35H6Z" fill="#ffd986" stroke="#dd6b00" stroke-width="2.400"/><path class="b" d="M6 18Q14 18 18 28Q23 34 29 26Q34 17 42 16V24Q36 25 31 33Q23 42 15 34Q10 26 6 26Z"/><path class="g" d="M6 8Q14 8 20 13Q25 15 30 11Q36 6 42 6V13Q34 15 30 18Q23 23 16 18Q10 15 6 15Z"/></svg>
      <svg viewBox="0 0 46 46"><use href="#axis"/><path class="w" d="M7 14h9v30h-9zM35 4h8v40h-8z"/><path class="g" d="M20 14h5v13h-5z"/><path class="b" d="M28 4h2v22h-2z"/></svg>
      <svg viewBox="0 0 46 46"><path class="b" d="M1 3h44v13h-44zM6 16h33v13h-33zM14 29h18v12h-18z"/></svg>
      <svg viewBox="0 0 46 46"><use href="#axis"/><path d="M8 10h8v8h-8zM20 18h8v8h-8zM33 28h8v8h-8z" fill="#83beec"/><path d="M33 3h8v8h-8zM8 30h8v8h-8z" fill="#3b3a39"/></svg>
      <svg viewBox="0 0 46 46"><circle class="w" cx="23" cy="23" r="21.800"/><path class="b" d="M22 1.200V23L38 38A22 22 0 0 0 22 1.200Z"/></svg>
      <svg viewBox="0 0 46 46"><path d="M1.200 23A21.800 21.800 0 0 1 23 1.200V12A11 11 0 0 0 12 23Z" class="gw"/><path class="b" d="M23 1.200A21.800 21.800 0 1 1 1.200 24H12A11 11 0 1 0 23 12Z"/></svg>

      <svg viewBox="0 0 46 46"><path class="w" d="M1 1h44v44H1z"/><path class="b" d="M1 1h21v24H1zM1 25h21v20H1z"/><path class="k" d="M22 14H45M32 14V45M32 30H45"/></svg>
      <svg viewBox="0 0 46 46" class="sel"><circle cx="24" cy="20" r="14" fill="#fff" stroke="#3b3a39" stroke-width="2"/><path d="M15 14Q18 8 24 8L26 14L20 20ZM30 12L37 16L36 26L30 22ZM22 24L29 27L26 33L21 31Z" fill="#2f9146"/><path class="k" d="M22 2A19 19 0 1 0 38 34M24 38V44M9 44H40"/></svg>
      <svg viewBox="0 0 46 46"><path class="g" d="M2 20H20V10L30 12L36 4H45V20L30 24L28 42L18 44L4 30Z"/><path class="b" d="M1 4H18L20 14L16 22H4ZM28 22H45Q46 38 38 38L30 42H22L28 32Z"/></svg>
      <svg viewBox="0 0 46 46"><path d="M29 -2L2 46L22 38L28 30Z" fill="#3999c6"/><path d="M22 38L28 30L41 47Z" fill="#0072c6"/><path d="M29 -2L40 46L28 30L22 38Z" fill="#59b4d9"/><path d="M22 38L28 29L41 47Z" fill="#0072c6"/></svg>
      <svg viewBox="0 0 46 46"><path class="w" d="M1 32A22 22 0 0 1 12 14L18 24Q12 27 12 32Z"/><path class="b" d="M12 13A22 22 0 0 1 45 32H34Q33 23 24 22L18 24Z"/><path d="M18 30L31 20L27 32Q20 36 18 30Z" fill="#3b3a39"/></svg>
      <svg viewBox="0 0 46 46"><path class="w" d="M1 7h44v34H1z"/><text x="6" y="29" textLength="34" class="n123">123</text><path d="M6 34H40" stroke="#797774" stroke-width="2.400"/></svg>

      <svg viewBox="0 0 46 46"><path class="w" d="M1 1h44v44H1z"/><path d="M9 8V38" stroke="#797774" stroke-width="2"/><path d="M13 13H38M13 28H38" stroke="#0063b1" stroke-width="4.500"/><path d="M13 19H26M13 34H26" stroke="#797774" stroke-width="2.400"/></svg>
      <svg viewBox="0 0 46 46"><path class="w" d="M1 4h44v36H1z"/><path d="M6 25L14 11L22 25Z" fill="#9fd89f" stroke="#2f9146" stroke-width="2"/><path d="M24 11H40L32 25Z" fill="#f1a3a3" stroke="#d02020" stroke-width="2"/><path d="M6 32H40" stroke="#797774" stroke-width="2.400"/></svg>
      <svg viewBox="0 0 46 46"><path class="w" d="M1 8h44v37H1z"/><path class="gf" d="M1 1h44v7H1z"/><path class="g" d="M9 17h7v8h-7zM9 30h7v8h-7z"/><path d="M22 22H48V46H22Z" fill="#f3f2f1"/><path class="w" d="M24 24H47V28L39 35V46H33V35L24 28Z"/></svg>
      <svg viewBox="0 0 46 46"><path class="w" d="M1 8h44v37H1z"/><path class="gf" d="M1 1h44v7H1z"/><path d="M2 20H44M2 32H44M15 9V44M30 9V44" class="gw"/></svg>
      <svg viewBox="0 0 46 46"><path class="w" d="M1 8h44v37H1z"/><path class="gf" d="M1 1h44v7H1z"/><path d="M1 20H30M15 8V32" class="gw"/><path d="M30 9H44V44H2V31H30Z" fill="#83beec"/><path d="M30 9V44M30 20H44M2 31H44M15 31V44" fill="none" stroke="#0063b1" stroke-width="2.200"/><path class="k" d="M1 8V45H45V8"/></svg>
      <svg viewBox="0 0 46 46"><text x="9" y="37" textLength="24" lengthAdjust="spacingAndGlyphs" class="ltr">R</text></svg>

      <svg viewBox="0 0 46 46"><text x="-1" y="31" textLength="47" lengthAdjust="spacingAndGlyphs" class="ltr">Py</text></svg>
      <svg viewBox="0 0 46 46"><use href="#axis"/><path d="M2 9H32" stroke="#1e8bcd" stroke-width="2.600"/><path d="M2 21H24M2 31H14" stroke="#797774" stroke-width="2.400"/><circle class="b" cx="37" cy="9" r="5"/><circle class="g" cx="27" cy="21" r="3"/><circle class="g" cx="17" cy="31" r="3"/></svg>
      <svg viewBox="0 0 46 46"><path class="k" d="M17 21H28M28 6H23V37H28"/><path class="b" d="M1 16h16v11H1zM29 1h15v11H29zM29 16h15v11H29zM29 31h15v11H29z"/></svg>
      <svg viewBox="0 0 46 46"><path d="M1 4H45V32H20L9 44V32H1Z" fill="#fafafa" stroke="#0063b1" stroke-width="2.600"/></svg>
      <svg viewBox="0 0 46 46"><path class="w" d="M6 12V1H27L39 14V45H6V28M27 1V14H39"/><path d="M18 22H31M13 29H27" stroke="#1e8bcd" stroke-width="2.600"/><circle class="b" cx="4" cy="18" r="4.500"/></svg>
      <svg viewBox="0 0 46 46"><path class="w" d="M11 4H2Q1 18 12 21M35 4H44Q45 18 34 21M11 2H35V18Q35 26 28 30V34L32 40H14L18 34V30Q11 26 11 18Z"/><path class="b" d="M11 1h24v7H11zM13 39h20v6H11z"/></svg>

      <svg viewBox="0 0 46 50"><path class="w" d="M4 1H26L40 14V49H4ZM26 1V14H40"/><path d="M10 28h6v15h-6zM19 34h6v9h-6zM29 23h6v20h-6z" fill="#3b3a39"/></svg>
      <svg viewBox="0 0 46 50"><path class="w" d="M2 34V43H45V10H22"/><text x="11" y="34" textLength="30" class="n123">123</text><path d="M6 38H40" stroke="#797774" stroke-width="2.400"/><svg x="-3" y="0" width="24" height="32"><use href="#bolt"/></svg></svg>
      <svg viewBox="0 0 46 50"><path class="gw" d="M25 4h17v17H25zM1 26h19v19H1z"/><path class="b" d="M12 10h8v10h-8z"/><path d="M22 24H48V50H22Z" fill="#f3f2f1"/><path class="w" d="M24 26H47V30L39 37V48H33V37L24 30Z"/><svg x="-3" y="0" width="24" height="32"><use href="#bolt"/></svg></svg>
      <svg viewBox="0 0 46 50"><path class="b" d="M1 3H44V20L38 26L30 34V47H1Z"/><path d="M5 8H34Q24 16 28 22L18 32V40L5 42Z" fill="#f3f2f1" stroke="#0063b1" stroke-width="1.500"/><path d="M-1 1H12V16L5 28L-2 16Z" fill="#dd6b00"/><circle cx="5.500" cy="10" r="3.500" fill="#fff"/><circle cx="40" cy="41" r="6.500" fill="#dd6b00"/><circle cx="45" cy="29" r="4" fill="#dd6b00"/></svg>
      <svg viewBox="0 0 46 50"><path d="M18 4Q21 2 24 5L45 25L27 46Q24 48 21 45L1 25ZM24 5Q27 2 30 5L45 25M21 45L36 30L18 14L27 5M27 14L36 22L18 40M27 14L18 22L36 38" fill="none" stroke="#8f2f9f" stroke-width="2.500"/></svg>
      <svg viewBox="0 0 46 50"><path d="M1 6H29L45 24L29 43H1L14 26ZM30 7L1 42M38 16L14 42M1 6L14 26" fill="#fafafa" stroke="#1277d8" stroke-width="2.600"/></svg>
    </div>
    <svg class="more"><use href="#dots3"/></svg>
    <div class="wells">
      <div class="wl">Location</div><div class="well tall"><div class="chip">City<svg><use href="#chev"/></svg><svg class="x" viewBox="0 0 20 20"><path d="M1 1L19 19M19 1L1 19"/></svg></div></div>
      <div class="wl">Legend</div><div class="well"><div class="chip">Type<svg><use href="#chev"/></svg><svg class="x" viewBox="0 0 20 20"><path d="M1 1L19 19M19 1L1 19"/></svg></div></div>
      <div class="wl">Latitude</div><div class="well empty">Add data fields here</div>
      <div class="wl">Longitude</div><div class="well empty">Add data fields here</div>
      <div class="wl">Bubble size</div><div class="well"><div class="chip">TotalSales<svg><use href="#chev"/></svg><svg class="x" viewBox="0 0 20 20"><path d="M1 1L19 19M19 1L1 19"/></svg></div></div>
      <div class="wl">Tooltips</div><div class="well empty">Add data fields here</div>
      <div class="wl drill">Drill through</div>
      <i class="wscroll"></i>
    </div>
  </aside>

  <aside class="data">
    <div class="phead"><h2>Data</h2><svg class="dblx"><use href="#dbl"/></svg></div>
    <div class="dsearch"><svg viewBox="0 0 38 38"><circle cx="14" cy="14" r="12.500"/><path d="M23 23L37 37"/></svg>Search</div>
    <div class="tree">
      <div class="tn"><svg class="cv r"><use href="#chev"/></svg><svg class="ti" viewBox="0 0 32 30"><rect x="1.500" y="1.500" width="24" height="23" rx="4"/><path d="M1.500 8H25M1.500 17H14M10 1.500V25M18 1.500V9"/><rect x="15" y="10" width="15" height="19" rx="3" class="pf"/><path d="M15 16H30M19 20h2M24 20h2M19 25h2M24 25h2"/></svg>Dates</div>
      <div class="tn"><svg class="cv"><use href="#chev"/></svg><svg class="ti"><use href="#table"/></svg><i class="bdg"><svg><use href="#check"/></svg></i>Hospitals<svg class="tdots"><use href="#dots3"/></svg></div>
      <div class="tf"><i class="cb"></i><u></u>Accreditation L...</div>
      <div class="tf"><i class="cb"></i><u></u>Annual Revenu...</div>
      <div class="tf"><i class="cb"></i><u></u>Bed Capacity</div>
      <div class="tf"><i class="cb on"><svg><use href="#check"/></svg></i><svg class="fi"><use href="#globe"/></svg>City</div>
      <div class="tf"><i class="cb"></i><u></u>Contact Email</div>
      <div class="tf"><i class="cb"></i><u></u>Hospital ID</div>
      <div class="tf"><i class="cb"></i><u></u>Hospital Name</div>
      <div class="tf"><i class="cb"></i><u></u>Phone Number</div>
      <div class="tf"><i class="cb"></i><u></u>Specialization</div>
      <div class="tf"><i class="cb"></i><svg class="fi"><use href="#globe"/></svg>State</div>
      <div class="tf"><i class="cb on"><svg><use href="#check"/></svg></i><u></u>Type</div>
      <div class="tf"><i class="cb"></i><u></u>Year Established</div>
      <div class="tn"><svg class="cv"><use href="#chev"/></svg><svg class="ti"><use href="#table"/></svg><i class="bdg"><svg><use href="#check"/></svg></i>Sales</div>
      <div class="tf"><i class="cb"></i><svg class="fi"><use href="#calc"/></svg>Avg Sale Price</div>
      <div class="tf"><i class="cb"></i><u></u>Category</div>
      <div class="tf"><i class="cb"></i><u></u>Date</div>
      <div class="tf"><i class="cb"></i><u></u>Drug Name</div>
      <div class="tf"><i class="cb"></i><u></u>Hospital ID</div>
      <div class="tf"><i class="cb"></i><svg class="fi"><use href="#calc"/></svg>Number of Tran...</div>
      <div class="tf"><i class="cb"></i><svg class="fi"><use href="#sigma"/></svg>Quantity Sold</div>
      <div class="tf"><i class="cb"></i><svg class="fi"><use href="#calc"/></svg>Total Quantity S...</div>
      <div class="tf"><i class="cb"></i><svg class="fi"><use href="#sigma"/></svg>Total Sales</div>
      <div class="tf"><i class="cb on"><svg><use href="#check"/></svg></i><svg class="fi"><use href="#calc"/></svg>TotalSales</div>
      <div class="tf"><i class="cb"></i><u></u>Transaction ID</div>
      <div class="tf"><i class="cb"></i><u></u>Unit Price</div>
    </div>
  </aside>
</main>

<div class="status">
  <span class="pof">Page 1 of 1</span>
  <svg class="zoomctl" viewBox="0 0 320 58"><g fill="#605e5c"><rect x="11" y="27" width="10" height="4"/><rect x="33" y="28" width="250" height="2"/><rect x="117" y="15" width="10" height="28"/><rect x="157" y="23" width="3" height="12"/><path d="M305.500 20h3v7.500h7.500v3h-7.500v8.500h-3v-8.500h-7.500v-3h7.500z"/></g></svg>
  <span class="pct">74%</span>
  <svg class="fit" viewBox="0 0 40 30"><path d="M1.500 1.500H38.500V28.500H1.500ZM12 7H7V12M28 7H33V12M12 23H7V18M28 23H33V18"/></svg>
</div>

<div class="taskbar">
  <svg class="win" viewBox="0 0 120 101"><path d="M40 37L57 34V50H40ZM59 33.500L80 30.500V50H59ZM40 52H57V68L40 65.500ZM59 52H80V71L59 68.500Z" fill="#fff"/></svg>
  <div class="tsearch"><svg class="tmag" viewBox="0 0 50 50"><circle cx="33" cy="17" r="15.500"/><path d="M22 28L1 49"/></svg><span>Type here to search</span>
    <svg class="spark" viewBox="0 0 152 64"><path d="M59 2Q64 26 88 31Q64 36 59 60Q54 36 30 31Q54 26 59 2ZM116 27Q118 38 130 41Q118 44 116 54Q113 44 102 41Q113 38 116 27Z" fill="url(#gold)" stroke="#f9bf28" stroke-width="3" stroke-linejoin="round"/><path d="M13 42Q15 48 21 50Q16 53 14 62Q10 56 1 54Q10 50 13 42Z" fill="#08a8ee"/><circle cx="100" cy="7" r="5" fill="#f7632b"/><circle cx="146" cy="56" r="5" fill="#8cc63f"/></svg></div>
  <svg class="apps" viewBox="840 2299 1000 101">
    <rect x="1712" y="2299" width="122" height="101" fill="#4a4a4a"/>
    <path d="M881 2331V2338H907V2331M881 2369V2362H907V2369M881 2343H907V2357H881ZM918 2331V2340M918 2352V2369" fill="none" stroke="#fff" stroke-width="2.500"/><circle cx="918" cy="2346" r="3.500" fill="#fff"/>
    <path d="M999 2380L1003 2364A29.500 29.500 0 1 1 1014 2375Z" fill="#25d366"/><path d="M1004 2374L1006.500 2363A24 24 0 1 1 1016 2371Z" fill="#1c1c1c"/><path d="M1018 2336Q1014 2340 1017 2348Q1024 2361 1037 2364Q1043 2364 1044 2357L1036 2352L1032 2356Q1025 2352 1023 2346L1026 2342L1023 2335Z" fill="#25d366"/>
    <circle cx="1058" cy="2369" r="19.500" fill="#333" stroke="#8a8a8a" stroke-width="2"/><text x="1058" y="2378" text-anchor="middle" font-size="25">1</text>
    <ellipse cx="1139" cy="2353" rx="16" ry="10" fill="#8a8a8a"/><ellipse cx="1151" cy="2338" rx="22" ry="14" transform="rotate(-25 1151 2338)" fill="#f0f0f0" stroke="#c33" stroke-width="1.500"/><path d="M1146 2330L1160 2356M1162 2328L1140 2352" stroke="#999" stroke-width="3"/><path d="M1160 2352L1166 2360M1156 2354L1158 2366" stroke="#1582c8" stroke-width="3"/><ellipse cx="1171" cy="2360" rx="8" ry="6" fill="none" stroke="#1582c8" stroke-width="4" transform="rotate(35 1171 2360)"/><ellipse cx="1158" cy="2371" rx="5" ry="7" fill="none" stroke="#1582c8" stroke-width="4"/>
    <path d="M1250 2327H1270L1274 2332H1302V2370H1250Z" fill="#ffca4b"/><path d="M1250 2327H1270L1274 2332L1270 2336H1250Z" fill="#e09b00"/><path d="M1257 2372V2354Q1257 2350 1261 2350H1291Q1295 2350 1295 2354V2372H1286V2361H1267V2372Z" fill="#3a96dd"/>
    <svg x="1370" y="2320" width="60" height="60"><use href="#chrome"/></svg><svg x="1494" y="2320" width="60" height="60"><use href="#chrome"/></svg>
    <circle cx="1539" cy="2365" r="19.500" fill="#f4f4f4"/><path d="M1530 2360Q1530 2351 1539 2351T1548 2360Q1548 2373 1539 2375Q1530 2373 1530 2360Z" fill="#b98a6c"/><path d="M1530 2358Q1530 2350 1539 2350T1548 2358L1545 2355H1533ZM1531 2367Q1533 2377 1539 2377T1547 2367L1542 2370H1536Z" fill="#3c2c24"/><path d="M1527 2380Q1531 2375 1539 2376T1551 2380Q1540 2388 1527 2380Z" fill="#7a4a32"/>
    <path d="M1631 2323H1676V2337H1631Z" fill="#41a5ee"/><path d="M1631 2337H1676V2350H1631Z" fill="#2b7cd3"/><path d="M1631 2350H1676V2364H1631Z" fill="#185abd"/><path d="M1631 2364H1676V2377H1631Z" fill="#103f91"/><rect x="1618" y="2335" width="31" height="30" rx="2" fill="#185abd"/><text x="1633.500" y="2358" text-anchor="middle" font-size="22" font-weight="700">W</text>
    <rect x="1773" y="2320" width="22" height="60" rx="3" fill="#d99a10"/><rect x="1761" y="2335" width="22" height="45" rx="3" fill="#f0c63c"/><rect x="1749" y="2350" width="22" height="30" rx="3" fill="#f8de72"/>
    <path d="M1227 2395h100v5h-100zM1474 2395h101v5h-101zM1599 2395h100v5h-100zM1712 2395h122v5h-122z" fill="#76b9ed"/>
  </svg>
  <svg class="tray" viewBox="2860 2299 980 101">
    <path d="M2878 2350A29 29 0 0 0 2934 2350Q2936 2336 2926 2330Q2920 2350 2896 2352Z" fill="#f59a23"/><path d="M2888 2335H2906M2888 2345H2934M2878 2355H2906M2915 2355H2924M2878 2365H2924" stroke="#707070" stroke-width="5" stroke-linecap="round"/>
    <circle cx="2921" cy="2335" r="15" fill="#c42b1c"/><text x="2921" y="2342.500" text-anchor="middle" font-size="21">1</text>
    <g font-size="33"><text x="2957" y="2363.500" textLength="71" lengthAdjust="spacingAndGlyphs">29°C</text><text x="3050" y="2363.500" textLength="103" lengthAdjust="spacingAndGlyphs">Smoke</text></g>
    <g font-size="28.500"><text x="3564" y="2338.500" textLength="102" lengthAdjust="spacingAndGlyphs">5:07 am</text><text x="3541" y="2385.500" textLength="149" lengthAdjust="spacingAndGlyphs">11/08/2025</text></g>
    <g fill="none" stroke="#fff" stroke-width="2.600"><path d="M3227 2356L3242.500 2340L3258 2356M3304 2343H3309L3316 2336V2363L3309 2356H3304ZM3322 2342Q3328 2349 3322 2357M3328 2338Q3337 2349 3328 2361M3334 2333Q3347 2349 3334 2367M3400 2341H3419V2361H3393M3421 2346V2354M3389 2335V2341M3395 2335V2341M3384 2341H3396V2346Q3396 2351 3390 2351T3384 2346ZM3390 2351V2361M3471 2366Q3472 2340 3500 2338M3480 2366Q3481 2348 3500 2346M3488 2366Q3489 2356 3500 2354M3738 2330.500H3776V2363H3764L3757 2370L3750 2363H3738Z"/></g>
    <path d="M3398 2345H3416V2357H3394V2352Q3398 2351 3398 2345Z" fill="#fff"/><circle cx="3497" cy="2363" r="3.500" fill="#fff"/><path d="M3829 2300V2400" stroke="#6d6d6d" stroke-width="2"/>
  </svg>
</div>
</body>
</html>
```

FILE: styles.css
```css
* { box-sizing: border-box; }
html, body { margin: 0; }
body {
  width: 3840px; height: 2400px; overflow: hidden;
  display: flex; flex-direction: column;
  font-family: "Open Sans", "Noto Sans", sans-serif;
  color: #252423; background: #fff;
}
h2, h3, p { margin: 0; }
i, em, u { font-style: normal; text-decoration: none; }
svg { display: block; fill: none; overflow: visible; }
svg text { fill: currentColor; font-family: "Open Sans", "Noto Sans", sans-serif; }
.defs { position: absolute; }

/* shared icon strokes */
.k { fill: none; stroke: #3b3a39; stroke-width: 2.6; }
.k2 { fill: none; stroke: #797774; stroke-width: 2.4; }
.w, .wh { fill: #fafafa; stroke: #3b3a39; stroke-width: 2.4; }
.b { fill: #83beec; stroke: #0063b1; stroke-width: 2.4; }
.g { fill: #c8c6c4; stroke: #797774; stroke-width: 2.4; }
.gf { fill: #c8c6c4; stroke: #3b3a39; stroke-width: 2.4; }
.gw { fill: none; stroke: #797774; stroke-width: 2.2; }
.o { fill: none; stroke: #dd6b00; stroke-width: 3; }
.fx { font: italic 46px "Liberation Serif", serif !important; fill: #3b3a39; }
.n123 { font-size: 21px; fill: #1e8bcd !important; }
.ltr { font-size: 41px; font-weight: 700; fill: #1e8bcd !important; }
.ico40 { width: 40px; height: 40px; }
.st-dark { stroke: #3b3a39; stroke-width: 2.4; }

/* title bar */
.titlebar { height: 85px; flex: none; background: #3b3a38; color: #fff; display: flex; align-items: center; }
.tb-left { width: 1000px; height: 85px; }
.tb-title { font-size: 28px; fill: #fff; }
.tb-search { margin-left: 677px; width: 1000px; height: 60px; background: #d5d5d2; border-radius: 5px; display: flex; align-items: center; padding-left: 44px; gap: 26px; font-size: 33px; letter-spacing: -.2px; color: #1c5d52; }
.tb-search span { padding-top: 4px; }
.tb-right { margin-left: auto; display: flex; align-items: center; padding-right: 42px; font-size: 29px; color: #f3f2f1; }
.tb-right span { margin-right: 26px; padding-top: 2px; }
.avatar { width: 50px; height: 50px; margin-right: 79px; }
.winbtn { width: 26px; height: 26px; stroke: #fff; stroke-width: 2.4; margin-top: 5px; }
.winbtn + .winbtn { margin-left: 84px; }

/* ribbon tabs */
.tabs { height: 78px; flex: none; background: #fafafa; display: flex; padding-left: 17px; font-size: 33px; letter-spacing: -.5px; }
.tab { position: relative; text-align: center; line-height: 82px; height: 78px; color: #252423; white-space: nowrap; }
.t-file { width: 131px; margin-right: 15px; } .t-home { width: 174px; } .t-insert { width: 165px; } .t-model { width: 228px; }
.t-view { width: 151px; } .t-opt { width: 219px; } .t-help { width: 151px; } .t-format { width: 188px; margin-right: 9px; } .t-drill { width: 249px; }
.tab.on { font-weight: 600; }
.tab.on::after { content: ""; position: absolute; left: 39px; bottom: 0; width: 96px; height: 8px; background: #117865; }
.tab.ctx { background: #fff; color: #117865; font-weight: 600; }
.t-drill { font-size: 34px; }
.share { margin: 10px 15px 8px auto; width: 208px; height: 60px; background: #117865; border-radius: 8px; color: #fff; display: flex; align-items: center; padding-left: 17px; font-size: 29px; }
.share-ico { width: 38px; height: 34px; stroke: #fff; stroke-width: 2.4; margin-right: 22px; }
.share-chev { width: 25px; height: 15px; stroke: #fff; stroke-width: 3; margin-left: 11px; }

/* ribbon */
.ribbon { height: 237px; flex: none; background: #fafafa; display: flex; position: relative; z-index: 5; box-shadow: 0 2px 12px rgba(0,0,0,.22); font-size: 28px; letter-spacing: -.2px; }
.grp { display: flex; flex-direction: column; justify-content: space-between; height: 220px; margin-top: 12px; border-right: 2px solid #d2d0ce; }
.grp-body { display: grid; padding-top: 8px; }
.grp-name { text-align: center; font-size: 25px; line-height: 38px; height: 30px; letter-spacing: -.4px; color: #3b3a39; }
.g-clip { width: 402px; } .g-clip .grp-body { grid-template-columns: 108px auto; padding-left: 17px; column-gap: 7px; }
.g-data { width: 898px; } .g-data .grp-body { grid-template-columns: 102px 142px 134px 102px 98px 142px 136px; padding-left: 18px; }
.g-query { width: 289px; } .g-query .grp-body { grid-template-columns: 144px 104px; padding-left: 18px; }
.g-insert { width: 367px; } .g-insert .grp-body { grid-template-columns: 100px 100px 128px; padding-left: 20px; }
.g-calc { width: 467px; } .g-calc .grp-body { grid-template-columns: 178px 126px 116px; padding-left: 22px; }
.g-sens { width: 183px; } .g-share { width: 147px; }
.g-copilot { width: 329px; } .g-copilot .grp-body { grid-template-columns: 182px 106px; padding-left: 19px; }
.btn { display: flex; flex-direction: column; align-items: center; }
.btn > svg { width: 100px; height: 90px; }
.btn b { font-weight: 400; line-height: 39.5px; text-align: center; white-space: nowrap; }
.btn.off b { color: #c2c0be; }
.dn { display: inline-block; width: 14px; height: 9px; stroke: #3b3a39; stroke-width: 5.5; margin-left: 6px; vertical-align: 3px; }
.off .dn { stroke: #b5b3b1; }
.clip-list { margin-top: -8px; font-size: 28.3px; }
.clip-list div { height: 60px; display: flex; align-items: center; gap: 6px; white-space: nowrap; }
.clip-list svg { width: 41px; height: 41px; }
.collapse { position: absolute; right: 12px; bottom: 17px; width: 23px; height: 14px; stroke: #252423; stroke-width: 4; transform: rotate(180deg); }

/* main layout */
.main { flex: none; height: 1840px; display: flex; background: #f3f2f1; }
.rail { width: 102px; border-right: 2px solid #e1dfdd; position: relative; }
.rail svg { width: 102px; height: 480px; }
.rl { font: 18px Inter, sans-serif !important; fill: #605e5c; stroke: #605e5c; stroke-width: .6; }
.rail-on { position: absolute; left: 0; top: 0; width: 7px; height: 100px; background: #117865; }
.center { width: 2835px; display: flex; flex-direction: column; }
.work { height: 1752px; display: flex; background: #fff; }
.canvas { position: relative; width: 2373px; height: 1752px; overflow: hidden; }

/* report visuals are placed freely on the page canvas */
.vis { position: absolute; background: #fff; box-shadow: 13px 14px 18px rgba(0,0,0,.29), 0 0 8px rgba(0,0,0,.05); }
.vis > svg { width: 100%; height: 100%; }
.vis h3, .din { font-family: Roboto, "Open Sans", sans-serif !important; font-weight: 600; color: #573b92; fill: #573b92 !important; }
.din { font-size: 50.5px; }
.v-title { left: 447px; top: 0; width: 1478px; height: 147px; color: #573b92; font-weight: 700; font-size: 76px; line-height: 133px; white-space: nowrap; text-align: center; letter-spacing: -1.05px; }
.v-date { left: 0; top: 155px; width: 435px; height: 147px; padding: 18px 15px 0 25px; }
.dates { display: flex; gap: 12px; }
.date { width: 191px; height: 57px; border: 2px solid #edebe9; padding: 3px 6px 0 14px; display: flex; align-items: center; justify-content: space-between; font-weight: 700; font-size: 24.5px; color: #573b92; letter-spacing: -.2px; }
.date svg { width: 24px; height: 24px; margin-top: -3px; }
.slider { margin: 34px 26px 0 28px; width: 343px; height: 6px; background: #605e5c; display: flex; justify-content: space-between; align-items: center; }
.slider i { width: 48px; height: 48px; border: 3px solid #605e5c; border-radius: 50%; background: #fff; margin: 0 -24px; flex: none; }
.v-slicer { left: 0; width: 432px; height: 148px; padding-left: 19px; }
.v-slicer h3 { height: 69px; margin-left: -19px; text-align: center; font-size: 45.5px; line-height: 55px; letter-spacing: -.9px; }
.drop { width: 395px; height: 51px; background: #c8b8e8; border: 2px solid #e1dcec; display: flex; align-items: center; justify-content: space-between; padding: 4px 9px 0; font-size: 26px; color: #605e5c; }
.drop svg { width: 26px; height: 14px; stroke: #605e5c; stroke-width: 2.2; }
.v-type { top: 322px; } .v-city { top: 488px; } .v-cat { top: 667px; }
.v-drug { left: 0; top: 843px; width: 447px; height: 493px; box-shadow: 13px -2px 18px rgba(0,0,0,.29); clip-path: inset(-20px -60px 0 0); }
.kpi h3 { text-align: center; font-size: 45.5px; line-height: 55px; letter-spacing: -.8px; white-space: nowrap; }
.kpi p { text-align: center; font: 700 52px/64px Roboto, sans-serif; color: #252423; margin-top: 17px; letter-spacing: -3px; }
.v-hosp { left: 1908px; top: 165px; width: 444px; height: 148px; }
.v-total { left: 1908px; top: 341px; width: 444px; height: 147px; }
.v-qty { left: 1925px; top: 520px; width: 427px; height: 149px; }
.v-trans { left: 1853px; top: 695px; width: 499px; height: 148px; }
.v-trend { left: 480px; top: 695px; width: 725px; height: 599px; }
.v-donut { left: 1225px; top: 695px; width: 628px; height: 599px; }
.v-map { left: 478px; top: 149px; width: 1378px; height: 530px; background: none; box-shadow: none; }
.v-map::before { content: ""; position: absolute; left: 3px; top: 3px; width: 1371px; height: 524px; background: #fff; box-shadow: 13px 14px 18px rgba(0,0,0,.32), 0 0 8px rgba(0,0,0,.1); }
.v-map > svg { position: relative; }
.v-map .map { overflow: hidden; }
.ax20 text { font-size: 19.5px; fill: #605e5c; } .ax22 text { font-size: 22px; fill: #605e5c; } .ax23 text { font-size: 23.5px; fill: #605e5c; }
.mb text { font-weight: 700; fill: #000; stroke: #fff; stroke-width: 2px; stroke-opacity: .6; paint-order: stroke; }
.ms text { fill: #3a62bd; stroke: #fff; stroke-width: 2px; stroke-opacity: .5; paint-order: stroke; }
.bing { fill: #6b7079 !important; font-weight: 500; }
.cr text { font-family: "Liberation Sans", Arial, sans-serif; font-size: 17px; fill: #111; stroke: #fff; stroke-width: 2px; stroke-opacity: .6; paint-order: stroke; }
.cr text + text { fill: #2049a8; }

.v-top { left: 1853px; top: 878px; width: 499px; height: 416px; padding: 0 0 0 10px; }
.v-top h3 { text-align: center; font-size: 45.5px; line-height: 54px; height: 53px; letter-spacing: -1px; margin-left: -12px; white-space: nowrap; }
.tbl { width: 464px; font-size: 23px; letter-spacing: -.15px; }
.tr { display: flex; justify-content: space-between; align-items: center; height: 37.2px; padding: 1px 6px 0 10px; white-space: nowrap; }
.th { height: 60px; align-items: flex-start; padding: 0 7px 0 57px; border-bottom: 2.5px solid #118dff; font-weight: 700; font-size: 23.3px; line-height: 52px; letter-spacing: -.3px; }
.rows { height: 238px; overflow: hidden; }
.rows .tr:nth-child(even) { background: #ececec; }
.tot { border-top: 3px solid #118dff; font-weight: 700; height: 42px; letter-spacing: -.1px; }
.hbar { margin: -1px 6px 0 2px; height: 15px; border-radius: 8px; background: #b0adab; }
.vbar { position: absolute; left: 476px; top: 60px; width: 13px; height: 235px; border-radius: 7px; background: #b0adab; }
.sort { position: absolute; left: 305px; top: 96px; border: 10px solid transparent; border-top: 9px solid #252423; border-bottom: 0; }
.vtools { position: absolute; left: 1653px; top: 92px; display: flex; gap: 10px; }
.vtools svg { width: 59px; height: 57px; background: #fff; stroke: #605e5c; stroke-width: 2.4; }
.vtools .fill { fill: #605e5c; stroke: none; }
.pagebreak { position: absolute; left: 5px; top: 1333px; width: 2368px; height: 6px; }

/* panels */
.phead { display: flex; align-items: center; height: 64px; }
.phead h2 { font-size: 38px; font-weight: 600; letter-spacing: -.5px; line-height: 65px; }
.dblx { width: 31px; height: 31px; stroke: #252423; stroke-width: 2.4; margin-left: auto; }
.filters { width: 462px; border-left: 2.500px solid #b3b0ad; background: #fff; padding: 16px 21px 0 19px; font-size: 28.2px; letter-spacing: -.1px; position: relative; }
.funnel { width: 44px; height: 38px; stroke: #252423; stroke-width: 3.4; margin: 0 18px 0 8px; }
.eye { width: 32px; height: 22px; stroke: #252423; stroke-width: 2.6; margin-left: auto; }
.filters .dblx { margin: 0 5px 0 43px; }
.fsearch { width: 410px; height: 84px; margin-top: 33px; border: 2px solid #b3b0ad; border-radius: 4px; display: flex; align-items: center; gap: 21px; padding-left: 26px; font-size: 32px; }
.filters hr { border: 0; height: 2px; background: #b3b0ad; margin: 11px -21px 0 -19px; }
.fsec { display: flex; justify-content: space-between; align-items: center; height: 40px; margin: 40px 9px 23px 0; white-space: nowrap; }
.fsec em { letter-spacing: 3px; }
.fcard { width: 420px; height: 153px; border: 2px solid #c8c6c4; border-radius: 5px; padding: 7px 21px; line-height: 65px; margin-bottom: 16px; white-space: nowrap; }
.fcard.add { height: 113px; display: flex; align-items: center; justify-content: center; padding: 0; margin-bottom: 0; }
.fcard.add + .fsec { margin-top: 65px; margin-bottom: 24px; }

.viz { width: 453px; border-left: 2px solid #d2d0ce; padding-top: 16px; overflow: hidden; }
.viz .phead { padding: 0 21px 0 19px; }
.viz .dblx { margin-right: 1px; }
.bv { font-size: 28px; font-weight: 600; letter-spacing: -.4px; padding-left: 20px; line-height: 40px; margin-top: 15px; }
.modes { display: flex; gap: 85px; padding-left: 19px; margin-top: 8px; }
.mode { width: 80px; height: 80px; border-radius: 5px; }
.mode.on { background: #d2d0ce; }
.mode svg { width: 80px; height: 80px; }
.caret { width: 452px; height: 24px; stroke: #8a8886; stroke-width: 2.4; margin-top: 10px; }
.vgrid { display: grid; grid-template-columns: repeat(6, 46px); gap: 24px; grid-auto-rows: 46px; padding: 26px 0 0 26px; }
.vgrid svg { width: 46px; height: 46px; }
.vgrid svg[viewBox="0 0 46 50"] { height: 50px; margin-top: -2px; }
.sel { outline: 2px solid #252423; outline-offset: 5px; }
.more { width: 36px; height: 6px; fill: #252423; margin: 40px 0 0 32px; }
.wells { position: relative; margin-top: 46px; border-top: 2px solid #dfdddb; height: 980px; font-size: 28.500px; padding: 23px 0 0 9px; overflow: hidden; letter-spacing: -.1px; }
.wl { line-height: 38px; height: 38px; padding-left: 22px; margin-bottom: 14px; }
.well { width: 425px; height: 71px; margin-bottom: 28px; border: 2px dashed #c8c6c4; border-radius: 4px; background: #fff; padding: 6px 5px; line-height: 68px; }
.well.tall { height: 90px; margin-bottom: 27px; }
.well.empty { height: 70px; margin-bottom: 28.500px; padding: 0 0 0 26px; }
.chip { height: 55px; background: #ebeae8; border: 2px solid #bebcba; border-radius: 3px; display: flex; align-items: center; padding: 2px 10px 0; line-height: 50px; }
.chip svg { width: 29px; height: 17px; stroke: #3b3a39; stroke-width: 2.2; margin: -3px 0 0 auto; }
.chip .x { width: 20px; height: 20px; margin-left: 15px; }
.drill { font-weight: 600; color: #484644; }
.wscroll { position: absolute; left: 434px; top: 5px; width: 15px; height: 782px; border-radius: 8px; background: #8a8886; }

.data { width: 450px; border-left: 2px solid #dfdddb; padding-top: 16px; }
.data .phead { padding: 0 20px 0 18px; }
.dsearch { margin: 33px 11px 0 9px; height: 60px; border: 2px solid #d1d1d1; border-bottom-color: #616161; border-radius: 8px; background: #fff; display: flex; align-items: center; gap: 15px; padding: 2px 0 0 29px; font-size: 32.5px; color: #707070; }
.dsearch svg { width: 37px; height: 36px; stroke: #616161; stroke-width: 2.4; }
.tree { margin-top: 24px; font-size: 28.500px; letter-spacing: -.1px; white-space: nowrap; }
.tn, .tf { height: 60px; display: flex; align-items: center; position: relative; }
.tn { padding-left: 31px; }
.cv { width: 28px; height: 16px; stroke: #3b3a39; stroke-width: 2.4; }
.cv.r { transform: rotate(-90deg); }
.ti { width: 32px; height: 30px; stroke: #252423; stroke-width: 2.8; margin: 0 14px 0 11px; }
.pf { fill: #f3f2f1; }
.bdg { position: absolute; left: 86px; top: 29px; width: 30px; height: 30px; border-radius: 50%; background: #117865; }
.bdg svg { width: 16px; height: 16px; margin: 7px; stroke: #fff; stroke-width: 6; }
.tdots { width: 28px; height: 5px; fill: #252423; margin: 0 17px 0 auto; }
.tf { padding-left: 108px; }
.cb { width: 30px; height: 30px; border: 2px solid #8a8886; border-radius: 4px; margin-right: 20px; }
.cb.on { background: #117865; }
.cb svg { width: 30px; height: 30px; margin: -2px; stroke: #fff; stroke-width: 2.4; }
.tf u { width: 45px; }
.fi { width: 30px; height: 34px; stroke: #252423; stroke-width: 2.6; margin-right: 15px; }

/* page tabs */
.pages { height: 88px; display: flex; background: #f3f2f1; }
.pg-ico { width: 319px; height: 88px; }
.pg-tab { width: 188px; background: #fff; border-left: 2px solid #b3b0ad; border-bottom: 10px solid #117865; text-align: center; font-weight: 600; font-size: 28.5px; letter-spacing: -.6px; line-height: 91px; height: 88px; color: #252423; }
.pg-add { width: 99px; background: #117865; border-left: 1px solid #f3f2f1; display: flex; align-items: center; justify-content: center; }
.pg-add svg { width: 28px; height: 28px; stroke: #fff; stroke-width: 7; margin-top: -4px; }

/* status */
.status { height: 59px; flex: none; background: #f3f2f1; border-top: 2px solid #dfdddb; display: flex; align-items: center; padding: 0 45px 0 10px; font-size: 28px; letter-spacing: -.4px; color: #484644; }
.pof { font-size: 29px; letter-spacing: 0; padding-top: 3px; }
.zoomctl { width: 320px; height: 58px; margin-left: auto; }
.pct { color: #605e5c; width: 57px; margin: 0 49px 0 30px; }
.fit { width: 40px; height: 30px; stroke: #605e5c; stroke-width: 3; }

/* taskbar */
.taskbar { height: 101px; flex: none; background: #1c1c1c; display: flex; }
.win { width: 120px; height: 101px; }
.tsearch { width: 720px; background: #f2f2f2; border: 3px solid #c3c3c3; display: flex; align-items: center; padding-left: 28px; font-size: 34.8px; letter-spacing: -.1px; color: #2b2b2b; }
.tsearch span { padding-top: 4px; }
.tmag { width: 49px; height: 49px; stroke: #000; stroke-width: 2.8; margin-right: 32px; }
.spark { width: 152px; height: 64px; margin-left: auto; margin-right: 24px; }
.apps { width: 1000px; height: 101px; }
.tray { width: 980px; height: 101px; margin-left: auto; }
.apps text, .tray text { fill: #fff; }
```
